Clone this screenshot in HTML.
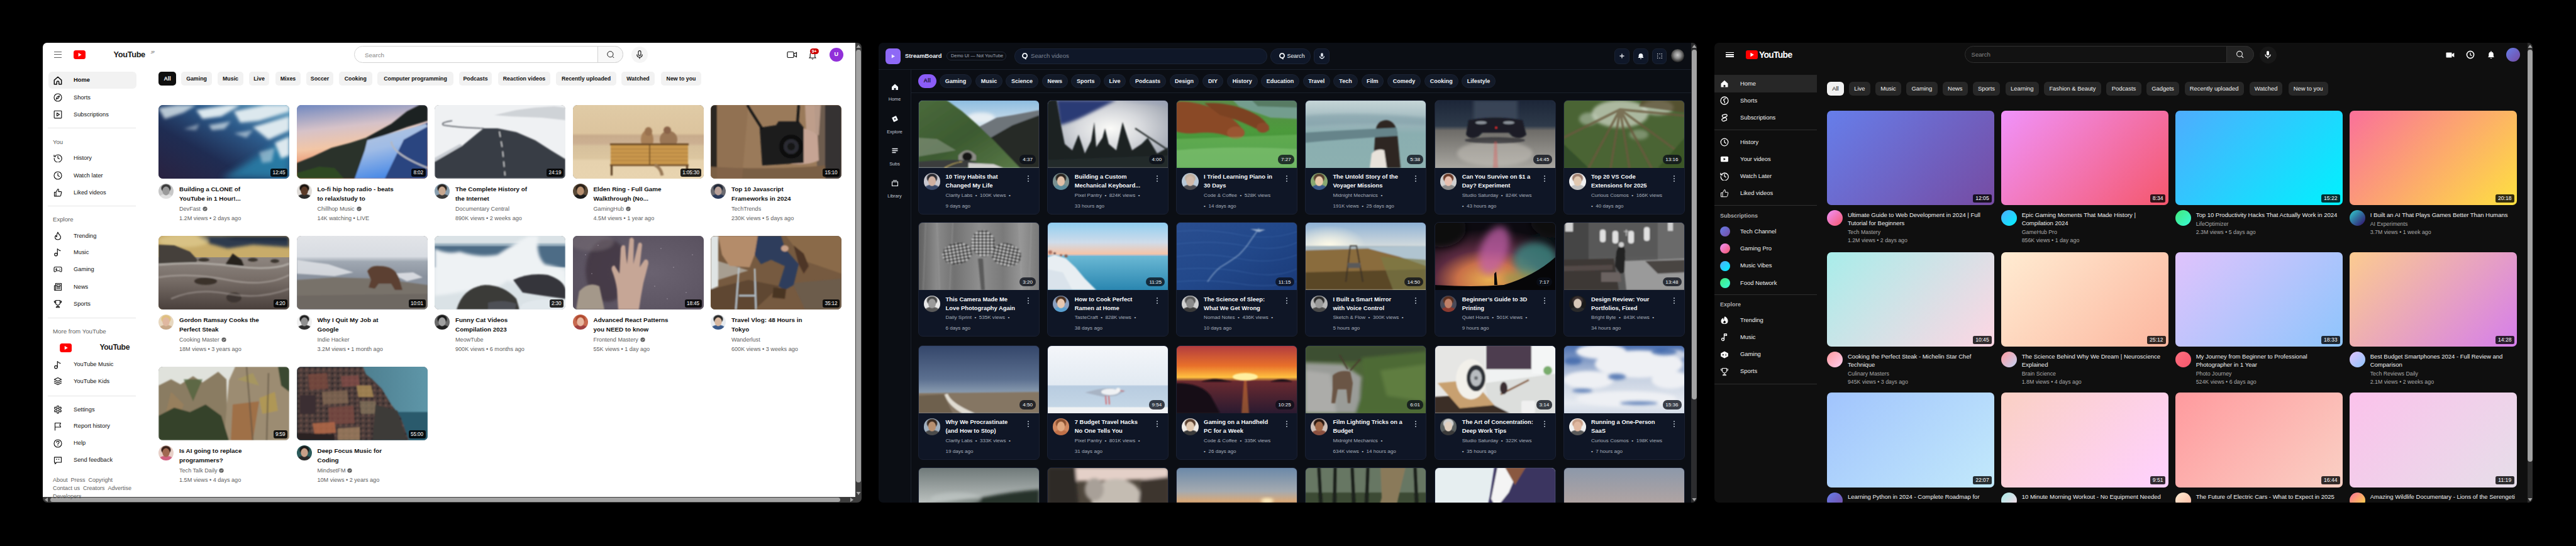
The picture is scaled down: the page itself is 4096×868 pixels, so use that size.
<!DOCTYPE html><html><head><meta charset="utf-8"><title>r</title><style>
*{margin:0;padding:0;box-sizing:border-box}
html,body{width:4096px;height:868px;overflow:hidden;background:#000}
body{font-family:"Liberation Sans",sans-serif;position:relative}
.p{position:absolute;overflow:hidden}
.ab{position:absolute;white-space:nowrap}
svg{position:absolute;display:block}


</style></head><body>
<svg width="0" height="0" style="position:absolute"><defs><filter id="bl1" x="-10%" y="-10%" width="120%" height="120%"><feGaussianBlur stdDeviation="1.2"/></filter><filter id="bl2" x="-30%" y="-30%" width="160%" height="160%"><feGaussianBlur stdDeviation="2.5"/></filter><filter id="bl4" x="-30%" y="-30%" width="160%" height="160%"><feGaussianBlur stdDeviation="6"/></filter></defs></svg>
<div class="p" style="left:68px;top:68px;width:1302px;height:731px;border-radius:7px;background:#3d3d3d">
<div style="position:absolute;left:-68px;top:-68px;width:4096px;height:868px">
<div class="ab" style="left:68px;top:68px;width:1292px;height:722px;background:#fff"></div>
<div class="ab" style="left:1361px;top:79px;width:8px;height:688px;background:#a3a3a3;border-radius:4px"></div>
<svg style="left:1361px;top:70px" width="8" height="7"><path d="M4 1 L7.5 6 L0.5 6Z" fill="#a3a3a3"/></svg>
<svg style="left:1361px;top:781px" width="8" height="7"><path d="M0.5 1 L7.5 1 L4 6Z" fill="#a3a3a3"/></svg>
<div class="ab" style="left:80px;top:791px;width:1256px;height:7px;background:#a3a3a3;border-radius:4px"></div>
<svg style="left:70px;top:790px" width="8" height="9"><path d="M1 4.5 L6 1 L6 8Z" fill="#a3a3a3"/></svg>
<svg style="left:1350px;top:790px" width="8" height="9"><path d="M7 4.5 L2 1 L2 8Z" fill="#a3a3a3"/></svg>
<div class="ab" style="left:86.3px;top:81.8px;width:11.5px;height:1.2px;background:#606060"></div>
<div class="ab" style="left:86.3px;top:85.9px;width:11.5px;height:1.2px;background:#606060"></div>
<div class="ab" style="left:86.3px;top:90.5px;width:11.5px;height:1.2px;background:#606060"></div>
<svg style="left:117px;top:80px" width="19" height="14" viewBox="0 0 19 14"><rect x="0" y="0" width="19" height="14" rx="3.5" fill="#f00"/><path d="M7.6 4 L12.6 7 L7.6 10Z" fill="#fff"/></svg>
<div class="ab" style="left:180.5px;top:78.88px;font-size:12.8px;line-height:16.64px;color:#212121;font-weight:bold;letter-spacing:-0.35px">YouTube</div>
<div class="ab" style="left:239.5px;top:79.76px;font-size:5.6px;line-height:7.28px;color:#606060;">JP</div>
<div class="ab" style="left:563px;top:73px;width:428px;height:27px;border:1px solid #d3d3d3;border-radius:14px;background:#fff"></div>
<div class="ab" style="left:950px;top:73px;width:41px;height:27px;border:1px solid #d3d3d3;border-radius:0 14px 14px 0;background:#f8f8f8"></div>
<div class="ab" style="left:580px;top:82.13px;font-size:9.8px;line-height:12.74px;color:#888;">Search</div>
<svg style="left:963px;top:79px" width="16" height="16" viewBox="0 0 16 16"><circle cx="7.4" cy="7.2" r="4.6" fill="none" stroke="#0f0f0f" stroke-width="0.95"/><path d="M10.7 10.5 L13.2 13" stroke="#0f0f0f" stroke-width="1"/></svg>
<div class="ab" style="left:1003.5px;top:73.5px;width:26px;height:26px;border-radius:13px;background:#f5f5f5"></div>
<svg style="left:1010px;top:79px" width="14" height="16" viewBox="0 0 14 16"><rect x="5" y="1.6" width="4" height="7.6" rx="2" fill="none" stroke="#0f0f0f" stroke-width="1.1"/><path d="M2.8 7.5 Q2.8 12 7 12 Q11.2 12 11.2 7.5" fill="none" stroke="#0f0f0f" stroke-width="1.2"/><path d="M7 12 V14.5" stroke="#0f0f0f" stroke-width="1.2"/></svg>
<svg style="left:1251px;top:80px" width="17" height="14" viewBox="0 0 17 14"><rect x="1" y="2.5" width="10" height="9" rx="1.5" fill="none" stroke="#0f0f0f" stroke-width="1.2"/><path d="M11 6 L15.5 3.5 V10.5 L11 8" fill="none" stroke="#0f0f0f" stroke-width="1.2"/></svg>
<svg style="left:1284px;top:80px" width="16" height="16" viewBox="0 0 16 16"><path d="M3 12 H13 L11.8 10.5 V7 Q11.8 3.5 8 3.3 Q4.2 3.5 4.2 7 V10.5Z" fill="none" stroke="#0f0f0f" stroke-width="1.1"/><path d="M6.8 13.6 Q8 14.8 9.2 13.6" fill="none" stroke="#0f0f0f" stroke-width="1"/></svg>
<div class="ab" style="left:1287.5px;top:77px;width:14px;height:9px;border-radius:4.5px;background:#cc0000;color:#fff;font-size:6.8px;font-weight:bold;line-height:9px;text-align:center">9+</div>
<div class="ab" style="left:1319px;top:76px;width:22px;height:22px;border-radius:11px;background:#9130d9"></div>
<div class="ab" style="left:1326.5px;top:81.15px;font-size:9px;line-height:11.7px;color:#fff;font-weight:bold;">U</div>
<div class="ab" style="left:77px;top:114px;width:140px;height:26.5px;border-radius:6px;background:#f2f2f2"></div>
<svg style="left:85px;top:120.50px" width="14" height="14" viewBox="0 0 14 14"><path d="M1.3 6.4 L7 1.2 L12.7 6.4 V12.9 H8.7 V9.4 Q8.7 7.9 7 7.9 Q5.3 7.9 5.3 9.4 V12.9 H1.3Z" fill="none" stroke="#0f0f0f" stroke-width="1.5" stroke-linejoin="round"/></svg>
<div class="ab" style="left:117px;top:121.45px;font-size:9.3px;line-height:12.09px;color:#0f0f0f;font-weight:bold;">Home</div>
<svg style="left:85px;top:147.70px" width="14" height="14" viewBox="0 0 14 14"><circle cx="7" cy="7" r="6" fill="none" stroke="#0f0f0f" stroke-width="1.15" stroke-linejoin="round" stroke-linecap="round"/><path d="M9.6 4.4 L8 8 L4.4 9.6 L6 6Z" fill="none" stroke="#0f0f0f" stroke-width="1.15" stroke-linejoin="round" stroke-linecap="round"/></svg>
<div class="ab" style="left:117px;top:148.66px;font-size:9.3px;line-height:12.09px;color:#0f0f0f;">Shorts</div>
<svg style="left:85px;top:174.60px" width="14" height="14" viewBox="0 0 14 14"><rect x="1.2" y="1.2" width="11.6" height="11.6" rx="0.8" fill="none" stroke="#0f0f0f" stroke-width="1.15" stroke-linejoin="round" stroke-linecap="round"/><path d="M5.5 4.5 L9.5 7 L5.5 9.5Z" fill="none" stroke="#0f0f0f" stroke-width="1.15" stroke-linejoin="round" stroke-linecap="round"/></svg>
<div class="ab" style="left:117px;top:175.56px;font-size:9.3px;line-height:12.09px;color:#0f0f0f;">Subscriptions</div>
<svg style="left:85px;top:243.70px" width="14" height="14" viewBox="0 0 14 14"><path d="M2.4 4.4 A6 6 0 1 1 1.2 7.6" fill="none" stroke="#0f0f0f" stroke-width="1.15" stroke-linejoin="round" stroke-linecap="round"/><path d="M1 2.5 V5 H3.5" fill="none" stroke="#0f0f0f" stroke-width="1.15" stroke-linejoin="round" stroke-linecap="round"/><path d="M7 4 V7.2 L9.2 8.6" fill="none" stroke="#0f0f0f" stroke-width="1.15" stroke-linejoin="round" stroke-linecap="round"/></svg>
<div class="ab" style="left:117px;top:244.66px;font-size:9.3px;line-height:12.09px;color:#0f0f0f;">History</div>
<svg style="left:85px;top:271.60px" width="14" height="14" viewBox="0 0 14 14"><circle cx="7" cy="7" r="6" fill="none" stroke="#0f0f0f" stroke-width="1.15" stroke-linejoin="round" stroke-linecap="round"/><path d="M7 3.5 V7.2 L9.4 8.6" fill="none" stroke="#0f0f0f" stroke-width="1.15" stroke-linejoin="round" stroke-linecap="round"/></svg>
<div class="ab" style="left:117px;top:272.56px;font-size:9.3px;line-height:12.09px;color:#0f0f0f;">Watch later</div>
<svg style="left:85px;top:298.60px" width="14" height="14" viewBox="0 0 14 14"><path d="M1.5 6.5 H4 V12.8 H1.5Z M4 6.5 L7 1.5 Q8.5 1.5 8.3 3.5 L8 5.6 H11.8 Q13 5.8 12.7 7 L11.6 11.8 Q11.3 12.8 10.2 12.8 H4" fill="none" stroke="#0f0f0f" stroke-width="1.15" stroke-linejoin="round" stroke-linecap="round"/></svg>
<div class="ab" style="left:117px;top:299.56px;font-size:9.3px;line-height:12.09px;color:#0f0f0f;">Liked videos</div>
<svg style="left:85px;top:368.00px" width="14" height="14" viewBox="0 0 14 14"><path d="M7 1.2 Q7.8 4 10 5.8 Q12 7.8 11.4 10.2 Q10.6 13 7 13 Q3.4 13 2.6 10.2 Q2 8 3.8 6.2 Q4 8 5.2 8.6 Q4.8 4.4 7 1.2Z" fill="none" stroke="#0f0f0f" stroke-width="1.15" stroke-linejoin="round" stroke-linecap="round"/></svg>
<div class="ab" style="left:117px;top:368.95px;font-size:9.3px;line-height:12.09px;color:#0f0f0f;">Trending</div>
<svg style="left:85px;top:394.30px" width="14" height="14" viewBox="0 0 14 14"><circle cx="4" cy="10.6" r="2.3" fill="none" stroke="#0f0f0f" stroke-width="1.15" stroke-linejoin="round" stroke-linecap="round"/><path d="M6.3 10.6 V1.5 Q8 3.8 11 4.6" fill="none" stroke="#0f0f0f" stroke-width="1.15" stroke-linejoin="round" stroke-linecap="round"/></svg>
<div class="ab" style="left:117px;top:395.25px;font-size:9.3px;line-height:12.09px;color:#0f0f0f;">Music</div>
<svg style="left:85px;top:421.30px" width="14" height="14" viewBox="0 0 14 14"><path d="M2.8 3.5 H11.2 Q13 3.5 13 6 V9.4 Q13 11 11.5 11 Q10.5 11 9.5 9.5 H4.5 Q3.5 11 2.5 11 Q1 11 1 9.4 V6 Q1 3.5 2.8 3.5Z" fill="none" stroke="#0f0f0f" stroke-width="1.15" stroke-linejoin="round" stroke-linecap="round"/><path d="M3.3 7 H5.9 M4.6 5.7 V8.3" fill="none" stroke="#0f0f0f" stroke-width="1.15" stroke-linejoin="round" stroke-linecap="round"/><circle cx="9.6" cy="6.4" r="0.5" fill="#0f0f0f"/><circle cx="10.4" cy="7.8" r="0.5" fill="#0f0f0f"/></svg>
<div class="ab" style="left:117px;top:422.25px;font-size:9.3px;line-height:12.09px;color:#0f0f0f;">Gaming</div>
<svg style="left:85px;top:448.60px" width="14" height="14" viewBox="0 0 14 14"><path d="M3.5 1.5 H12.5 V12.5 H2.5 Q1.5 12.5 1.5 11.5 V5 H3.5Z M3.5 5 V11.5" fill="none" stroke="#0f0f0f" stroke-width="1.15" stroke-linejoin="round" stroke-linecap="round"/><rect x="5.3" y="3.5" width="5.3" height="2.6" fill="none" stroke="#0f0f0f" stroke-width="1.15" stroke-linejoin="round" stroke-linecap="round"/><path d="M5.3 8 H10.6 M5.3 10 H10.6" fill="none" stroke="#0f0f0f" stroke-width="1.15" stroke-linejoin="round" stroke-linecap="round"/></svg>
<div class="ab" style="left:117px;top:449.56px;font-size:9.3px;line-height:12.09px;color:#0f0f0f;">News</div>
<svg style="left:85px;top:475.90px" width="14" height="14" viewBox="0 0 14 14"><path d="M3.6 1.5 H10.4 V5.5 Q10.4 9 7 9 Q3.6 9 3.6 5.5Z M3.6 2.8 H1.3 Q1.2 5.6 3.7 6 M10.4 2.8 H12.7 Q12.8 5.6 10.3 6 M7 9 V11.3 M4.3 12.7 H9.7 L9 11.3 H5Z" fill="none" stroke="#0f0f0f" stroke-width="1.15" stroke-linejoin="round" stroke-linecap="round"/></svg>
<div class="ab" style="left:117px;top:476.85px;font-size:9.3px;line-height:12.09px;color:#0f0f0f;">Sports</div>
<svg style="left:85px;top:572.50px" width="14" height="14" viewBox="0 0 14 14"><circle cx="4" cy="10.6" r="2.3" fill="none" stroke="#0f0f0f" stroke-width="1.15" stroke-linejoin="round" stroke-linecap="round"/><path d="M6.3 10.6 V1.5 Q8 3.8 11 4.6" fill="none" stroke="#0f0f0f" stroke-width="1.15" stroke-linejoin="round" stroke-linecap="round"/></svg>
<div class="ab" style="left:117px;top:573.46px;font-size:9.3px;line-height:12.09px;color:#0f0f0f;">YouTube Music</div>
<svg style="left:85px;top:599.00px" width="14" height="14" viewBox="0 0 14 14"><path d="M7 1.5 L12.6 4.2 L7 7 L1.4 4.2Z M1.4 7 L7 9.8 L12.6 7 M1.4 9.8 L7 12.6 L12.6 9.8" fill="none" stroke="#0f0f0f" stroke-width="1.15" stroke-linejoin="round" stroke-linecap="round"/></svg>
<div class="ab" style="left:117px;top:599.96px;font-size:9.3px;line-height:12.09px;color:#0f0f0f;">YouTube Kids</div>
<svg style="left:85px;top:643.80px" width="14" height="14" viewBox="0 0 14 14"><circle cx="7" cy="7" r="2.2" fill="none" stroke="#0f0f0f" stroke-width="1.15" stroke-linejoin="round" stroke-linecap="round"/><path d="M6 1.2 H8 L8.4 2.9 L9.8 3.7 L11.5 3.1 L12.5 4.9 L11.2 6.1 V7.9 L12.5 9.1 L11.5 10.9 L9.8 10.3 L8.4 11.1 L8 12.8 H6 L5.6 11.1 L4.2 10.3 L2.5 10.9 L1.5 9.1 L2.8 7.9 V6.1 L1.5 4.9 L2.5 3.1 L4.2 3.7 L5.6 2.9Z" fill="none" stroke="#0f0f0f" stroke-width="1.15" stroke-linejoin="round" stroke-linecap="round"/></svg>
<div class="ab" style="left:117px;top:644.75px;font-size:9.3px;line-height:12.09px;color:#0f0f0f;">Settings</div>
<svg style="left:85px;top:670.50px" width="14" height="14" viewBox="0 0 14 14"><path d="M2.5 13 V1.5 H11.5 L10 4.8 L11.5 8 H2.5" fill="none" stroke="#0f0f0f" stroke-width="1.15" stroke-linejoin="round" stroke-linecap="round"/></svg>
<div class="ab" style="left:117px;top:671.46px;font-size:9.3px;line-height:12.09px;color:#0f0f0f;">Report history</div>
<svg style="left:85px;top:697.50px" width="14" height="14" viewBox="0 0 14 14"><circle cx="7" cy="7" r="6" fill="none" stroke="#0f0f0f" stroke-width="1.15" stroke-linejoin="round" stroke-linecap="round"/><path d="M5 5.3 Q5 3.4 7 3.4 Q9 3.4 9 5.2 Q9 6.4 7.6 7 Q7 7.4 7 8.4" fill="none" stroke="#0f0f0f" stroke-width="1.15" stroke-linejoin="round" stroke-linecap="round"/><circle cx="7" cy="10.4" r="0.7" fill="#0f0f0f"/></svg>
<div class="ab" style="left:117px;top:698.46px;font-size:9.3px;line-height:12.09px;color:#0f0f0f;">Help</div>
<svg style="left:85px;top:724.50px" width="14" height="14" viewBox="0 0 14 14"><path d="M1.5 1.8 H12.5 V10 H5 L2.5 12.5 V10 H1.5Z" fill="none" stroke="#0f0f0f" stroke-width="1.15" stroke-linejoin="round" stroke-linecap="round"/><path d="M5 4.5 V6 M8.5 4.5 V6" stroke="#0f0f0f" stroke-width="1.3"/></svg>
<div class="ab" style="left:117px;top:725.46px;font-size:9.3px;line-height:12.09px;color:#0f0f0f;">Send feedback</div>
<div class="ab" style="left:76px;top:203px;width:140px;height:1px;background:#e5e5e5"></div>
<div class="ab" style="left:76px;top:327px;width:140px;height:1px;background:#e5e5e5"></div>
<div class="ab" style="left:76px;top:504.6px;width:140px;height:1px;background:#e5e5e5"></div>
<div class="ab" style="left:76px;top:628.8px;width:140px;height:1px;background:#e5e5e5"></div>
<div class="ab" style="left:84px;top:219.96px;font-size:9.6px;line-height:12.48px;color:#606060;">You</div>
<div class="ab" style="left:84px;top:342.96px;font-size:9.6px;line-height:12.48px;color:#606060;">Explore</div>
<div class="ab" style="left:84px;top:520.70px;font-size:9.7px;line-height:12.61px;color:#606060;">More from YouTube</div>
<svg style="left:95px;top:545.5px" width="19.3" height="14" viewBox="0 0 19 14"><rect x="0" y="0" width="19" height="14" rx="3.5" fill="#f00"/><path d="M7.6 4 L12.6 7 L7.6 10Z" fill="#fff"/></svg>
<div class="ab" style="left:158.5px;top:544.57px;font-size:12.2px;line-height:15.86px;color:#212121;font-weight:bold;letter-spacing:-0.4px">YouTube</div>
<div class="ab" style="left:84px;top:757.65px;font-size:9px;line-height:11.7px;color:#606060;">About&nbsp;&nbsp;Press&nbsp;&nbsp;Copyright</div>
<div class="ab" style="left:84px;top:771.15px;font-size:9px;line-height:11.7px;color:#606060;">Contact us&nbsp;&nbsp;Creators&nbsp;&nbsp;Advertise</div>
<div class="ab" style="left:84px;top:784.45px;font-size:9px;line-height:11.7px;color:#606060;">Developers</div>
<div class="ab" style="left:252px;top:114px;width:28px;height:22px;border-radius:5px;background:#0f0f0f;color:#fff;font-size:8.8px;font-weight:bold;line-height:23px;text-align:center">All</div>
<div class="ab" style="left:288px;top:114px;width:49px;height:22px;border-radius:5px;background:#f2f2f2;color:#0f0f0f;font-size:8.8px;font-weight:bold;line-height:23px;text-align:center">Gaming</div>
<div class="ab" style="left:346px;top:114px;width:41px;height:22px;border-radius:5px;background:#f2f2f2;color:#0f0f0f;font-size:8.8px;font-weight:bold;line-height:23px;text-align:center">Music</div>
<div class="ab" style="left:396px;top:114px;width:32px;height:22px;border-radius:5px;background:#f2f2f2;color:#0f0f0f;font-size:8.8px;font-weight:bold;line-height:23px;text-align:center">Live</div>
<div class="ab" style="left:438px;top:114px;width:40px;height:22px;border-radius:5px;background:#f2f2f2;color:#0f0f0f;font-size:8.8px;font-weight:bold;line-height:23px;text-align:center">Mixes</div>
<div class="ab" style="left:487px;top:114px;width:43px;height:22px;border-radius:5px;background:#f2f2f2;color:#0f0f0f;font-size:8.8px;font-weight:bold;line-height:23px;text-align:center">Soccer</div>
<div class="ab" style="left:539px;top:114px;width:52.5px;height:22px;border-radius:5px;background:#f2f2f2;color:#0f0f0f;font-size:8.8px;font-weight:bold;line-height:23px;text-align:center">Cooking</div>
<div class="ab" style="left:600px;top:114px;width:121px;height:22px;border-radius:5px;background:#f2f2f2;color:#0f0f0f;font-size:8.8px;font-weight:bold;line-height:23px;text-align:center">Computer programming</div>
<div class="ab" style="left:730px;top:114px;width:52px;height:22px;border-radius:5px;background:#f2f2f2;color:#0f0f0f;font-size:8.8px;font-weight:bold;line-height:23px;text-align:center">Podcasts</div>
<div class="ab" style="left:792px;top:114px;width:83px;height:22px;border-radius:5px;background:#f2f2f2;color:#0f0f0f;font-size:8.8px;font-weight:bold;line-height:23px;text-align:center">Reaction videos</div>
<div class="ab" style="left:884px;top:114px;width:96px;height:22px;border-radius:5px;background:#f2f2f2;color:#0f0f0f;font-size:8.8px;font-weight:bold;line-height:23px;text-align:center">Recently uploaded</div>
<div class="ab" style="left:988px;top:114px;width:53px;height:22px;border-radius:5px;background:#f2f2f2;color:#0f0f0f;font-size:8.8px;font-weight:bold;line-height:23px;text-align:center">Watched</div>
<div class="ab" style="left:1051px;top:114px;width:64px;height:22px;border-radius:5px;background:#f2f2f2;color:#0f0f0f;font-size:8.8px;font-weight:bold;line-height:23px;text-align:center">New to you</div>
<div class="ab" style="left:252px;top:167px;width:208px;height:117px;border-radius:7px;overflow:hidden;background:#777"><svg style="position:absolute;left:0;top:0" width="100%" height="100%" viewBox="0 0 208 117" preserveAspectRatio="none"><defs><linearGradient id="g11" x1="0" y1="1" x2="1" y2="0"><stop offset="0" stop-color="#2a2240"/><stop offset=".35" stop-color="#1f2c52"/><stop offset=".65" stop-color="#2c5a8a"/><stop offset="1" stop-color="#6aa8c8"/></linearGradient></defs>
<rect width="208" height="117" fill="url(#g11)"/>
<path d="M100 117 L208 50 L208 117Z" fill="#2c86b0" opacity=".8" filter="url(#bl4)"/>
<g fill="#dce8ee" filter="url(#bl2)"><path d="M0 5 L30 0 L60 0 L40 12 L10 22Z" opacity=".8"/><path d="M60 8 L110 0 L130 0 L100 18 L70 22Z"/><path d="M120 10 L170 0 L208 0 L208 10 L160 25 L130 28Z"/><path d="M150 35 L208 18 L208 40 L175 55Z"/><path d="M185 60 L208 50 L208 80 L195 85Z"/><path d="M80 32 L115 26 L105 38 L85 40Z" opacity=".7"/><path d="M120 45 L150 40 L140 52Z" opacity=".6"/><path d="M160 75 L185 68 L180 90 L165 92Z" opacity=".5"/><path d="M40 38 L65 30 L60 40Z" opacity=".5"/></g></svg></div>
<div class="ab" style="left:430.0px;top:268.2px;width:27.0px;height:12.5px;border-radius:3px;background:rgba(0,0,0,.85);color:#fff;font-size:8.2px;line-height:14.6px;text-align:center;letter-spacing:-0.1px">12:45</div>
<div class="ab" style="left:252px;top:292px;width:24px;height:24px;border-radius:12px;background:radial-gradient(ellipse 26% 32% at 50% 48%,#9a9a9a 0,#9a9a9a 80%,transparent 100%),radial-gradient(ellipse 36% 30% at 50% 30%,#3a3a3a 0,#3a3a3a 75%,transparent 100%),radial-gradient(ellipse 55% 35% at 50% 100%,#e0e0e0 0,#e0e0e0 80%,transparent 100%),#c8c8c8"></div>
<div class="ab" style="left:285px;top:292.5px;font-size:9.9px;line-height:15px;color:#0f0f0f;font-weight:bold;white-space:nowrap">Building a CLONE of<br>YouTube in 1 Hour!...</div>
<div class="ab" style="left:285px;top:327.08px;font-size:9.1px;line-height:11.83px;color:#606060;">DevFast<svg style="display:inline-block;position:relative;left:3px;top:1px" width="8" height="8" viewBox="0 0 8 8"><circle cx="4" cy="4" r="3.6" fill="#606060"/><path d="M2.3 4.1 L3.5 5.2 L5.7 2.9" fill="none" stroke="#fff" stroke-width="0.9"/></svg></div>
<div class="ab" style="left:285px;top:342.08px;font-size:9.1px;line-height:11.83px;color:#606060;">1.2M views • 2 days ago</div>
<div class="ab" style="left:471.5px;top:167px;width:208px;height:117px;border-radius:7px;overflow:hidden;background:#777"><svg style="position:absolute;left:0;top:0" width="100%" height="100%" viewBox="0 0 208 117" preserveAspectRatio="none"><defs><linearGradient id="g12" x1="0" y1="0" x2=".2" y2="1"><stop offset="0" stop-color="#7088c0"/><stop offset=".35" stop-color="#d6c2c8"/><stop offset=".6" stop-color="#f2c6a6"/><stop offset=".85" stop-color="#e88a64"/></linearGradient>
<linearGradient id="g12w" x1="0" y1="0" x2=".3" y2="1"><stop offset="0" stop-color="#b8c8dc"/><stop offset=".5" stop-color="#a0bce6"/><stop offset="1" stop-color="#4a8ae6"/></linearGradient></defs>
<rect width="208" height="117" fill="url(#g12)"/>
<g filter="url(#bl1)"><path d="M0 92 L25 82 L55 68 L85 60 L110 52 L125 50 L105 117 L0 117Z" fill="#2c302c"/><path d="M0 117 L0 108 L35 98 L60 100 L75 117Z" fill="#2e4a24"/>
<path d="M110 52 L150 30 L175 10 L195 0 L208 0 L208 25 L175 35 L140 48 L120 56Z" fill="#1c2420"/>
<path d="M122 58 L208 28 L208 117 L130 117Z" fill="#2a4480"/>
<path d="M112 56 L160 42 L205 30 L208 34 L170 55 L140 117 L92 117 L108 72Z" fill="url(#g12w)"/>
<path d="M150 58 Q152 78 208 100" stroke="#b4b8c0" stroke-width="2.6" fill="none"/></g></svg></div>
<div class="ab" style="left:654.0px;top:268.2px;width:22.5px;height:12.5px;border-radius:3px;background:rgba(0,0,0,.85);color:#fff;font-size:8.2px;line-height:14.6px;text-align:center;letter-spacing:-0.1px">8:02</div>
<div class="ab" style="left:471.5px;top:292px;width:24px;height:24px;border-radius:12px;background:radial-gradient(ellipse 26% 32% at 50% 48%,#5a3a28 0,#5a3a28 80%,transparent 100%),radial-gradient(ellipse 36% 30% at 50% 30%,#1a1410 0,#1a1410 75%,transparent 100%),radial-gradient(ellipse 55% 35% at 50% 100%,#2a2a2a 0,#2a2a2a 80%,transparent 100%),#e0dcd8"></div>
<div class="ab" style="left:504.5px;top:292.5px;font-size:9.9px;line-height:15px;color:#0f0f0f;font-weight:bold;white-space:nowrap">Lo-fi hip hop radio - beats<br>to relax/study to</div>
<div class="ab" style="left:504.5px;top:327.08px;font-size:9.1px;line-height:11.83px;color:#606060;">Chillhop Music<svg style="display:inline-block;position:relative;left:3px;top:1px" width="8" height="8" viewBox="0 0 8 8"><circle cx="4" cy="4" r="3.6" fill="#606060"/><path d="M2.3 4.1 L3.5 5.2 L5.7 2.9" fill="none" stroke="#fff" stroke-width="0.9"/></svg></div>
<div class="ab" style="left:504.5px;top:342.08px;font-size:9.1px;line-height:11.83px;color:#606060;">14K watching • LIVE</div>
<div class="ab" style="left:691px;top:167px;width:208px;height:117px;border-radius:7px;overflow:hidden;background:#777"><svg style="position:absolute;left:0;top:0" width="100%" height="100%" viewBox="0 0 208 117" preserveAspectRatio="none"><rect width="208" height="117" fill="#eff1f3"/>
<g filter="url(#bl1)"><path d="M95 16 L130 8 L160 4 L190 2 L208 4 L208 24 L170 20 L120 18Z" fill="#c4c8ce" opacity=".75"/>
<path d="M0 117 L208 117 L208 86 L185 72 L160 56 L130 43 L100 37 L78 37 L68 45 L45 64 L0 90Z" fill="#393c44"/>
<path d="M0 90 L45 64 L40 62 L0 84Z" fill="#c8ccd2"/>
<path d="M78 37 Q40 36 14 32 Q8 28 28 25" stroke="#4a4e56" stroke-width="1.4" fill="none"/>
<path d="M103 42 L108 70 L112 112" stroke="#d0d2d4" stroke-width="1.6" stroke-dasharray="9 7" fill="none"/></g></svg></div>
<div class="ab" style="left:869.0px;top:268.2px;width:27.0px;height:12.5px;border-radius:3px;background:rgba(0,0,0,.85);color:#fff;font-size:8.2px;line-height:14.6px;text-align:center;letter-spacing:-0.1px">24:19</div>
<div class="ab" style="left:691px;top:292px;width:24px;height:24px;border-radius:12px;background:radial-gradient(ellipse 26% 32% at 50% 48%,#c8a890 0,#c8a890 80%,transparent 100%),radial-gradient(ellipse 36% 30% at 50% 30%,#2a2420 0,#2a2420 75%,transparent 100%),radial-gradient(ellipse 55% 35% at 50% 100%,#3a3a3a 0,#3a3a3a 80%,transparent 100%),#8aa0b0"></div>
<div class="ab" style="left:724px;top:292.5px;font-size:9.9px;line-height:15px;color:#0f0f0f;font-weight:bold;white-space:nowrap">The Complete History of<br>the Internet</div>
<div class="ab" style="left:724px;top:327.08px;font-size:9.1px;line-height:11.83px;color:#606060;">Documentary Central</div>
<div class="ab" style="left:724px;top:342.08px;font-size:9.1px;line-height:11.83px;color:#606060;">890K views • 2 weeks ago</div>
<div class="ab" style="left:910.5px;top:167px;width:208px;height:117px;border-radius:7px;overflow:hidden;background:#777"><svg style="position:absolute;left:0;top:0" width="100%" height="100%" viewBox="0 0 208 117" preserveAspectRatio="none"><defs><linearGradient id="g14" x1="0" y1="0" x2="0" y2="1"><stop offset="0" stop-color="#e0cba6"/><stop offset=".38" stop-color="#dcc49e"/><stop offset=".42" stop-color="#c8ac8c"/><stop offset=".52" stop-color="#ccb092"/><stop offset=".56" stop-color="#d6c09c"/><stop offset=".72" stop-color="#dcc6a0"/><stop offset=".76" stop-color="#e6d2ae"/><stop offset="1" stop-color="#e8d4b0"/></linearGradient></defs>
<rect width="208" height="117" fill="url(#g14)"/>
<g filter="url(#bl1)"><ellipse cx="118" cy="55" rx="10" ry="15" fill="#a88058"/><ellipse cx="120" cy="42" rx="6" ry="7" fill="#9a7250"/><ellipse cx="152" cy="55" rx="14" ry="14" fill="#9a7654"/><ellipse cx="150" cy="40" rx="6" ry="6" fill="#8a6448"/>
<rect x="60" y="63" width="123" height="31" fill="#c9974c"/><path d="M60 70 H183 M60 76 H183 M60 82 H183 M60 88 H183" stroke="#a87838" stroke-width="1.2"/><path d="M122 63 V94" stroke="#7a5428" stroke-width="2"/>
<rect x="59" y="61" width="125" height="3" fill="#6a4a28"/><rect x="59" y="94" width="125" height="3" fill="#7a5630"/>
<rect x="60" y="96" width="3" height="16" fill="#5a3e22"/><rect x="180" y="96" width="3" height="16" fill="#5a3e22"/><path d="M130 95 Q140 100 142 112" stroke="#9a7a58" stroke-width="5" fill="none"/></g></svg></div>
<div class="ab" style="left:1081.6px;top:268.2px;width:33.9px;height:12.5px;border-radius:3px;background:rgba(0,0,0,.85);color:#fff;font-size:8.2px;line-height:14.6px;text-align:center;letter-spacing:-0.1px">1:05:30</div>
<div class="ab" style="left:910.5px;top:292px;width:24px;height:24px;border-radius:12px;background:radial-gradient(ellipse 26% 32% at 50% 48%,#b89070 0,#b89070 80%,transparent 100%),radial-gradient(ellipse 36% 30% at 50% 30%,#2a2018 0,#2a2018 75%,transparent 100%),radial-gradient(ellipse 55% 35% at 50% 100%,#1a1a1a 0,#1a1a1a 80%,transparent 100%),#5a4a38"></div>
<div class="ab" style="left:943.5px;top:292.5px;font-size:9.9px;line-height:15px;color:#0f0f0f;font-weight:bold;white-space:nowrap">Elden Ring - Full Game<br>Walkthrough (No...</div>
<div class="ab" style="left:943.5px;top:327.08px;font-size:9.1px;line-height:11.83px;color:#606060;">GamingHub<svg style="display:inline-block;position:relative;left:3px;top:1px" width="8" height="8" viewBox="0 0 8 8"><circle cx="4" cy="4" r="3.6" fill="#606060"/><path d="M2.3 4.1 L3.5 5.2 L5.7 2.9" fill="none" stroke="#fff" stroke-width="0.9"/></svg></div>
<div class="ab" style="left:943.5px;top:342.08px;font-size:9.1px;line-height:11.83px;color:#606060;">4.5M views • 1 year ago</div>
<div class="ab" style="left:1130px;top:167px;width:208px;height:117px;border-radius:7px;overflow:hidden;background:#777"><svg style="position:absolute;left:0;top:0" width="100%" height="100%" viewBox="0 0 208 117" preserveAspectRatio="none"><rect width="208" height="117" fill="#9a7a5a"/>
<g filter="url(#bl1)"><rect x="0" y="0" width="10" height="117" fill="#2a2724"/><rect x="182" y="0" width="26" height="117" fill="#353230"/><path d="M165 0 L182 0 L182 117 L170 117Z" fill="#5a5048" opacity=".7"/>
<path d="M0 98 Q100 104 182 96 L182 117 L0 117Z" fill="#7a5e44"/><path d="M10 0 L60 0 L50 117 L10 117Z" fill="#8a6a4c" opacity=".5"/>
<path d="M118 40 Q150 30 170 48 L172 88 Q150 98 120 92Z" fill="#c6a494"/><path d="M150 0 L175 0 L172 48 L152 44Z" fill="#c4a494" opacity=".85"/>
<path d="M78 36 L104 32 L108 26 L140 26 L148 36 L148 92 L82 96 Z" fill="#1a1a1c"/><circle cx="128" cy="66" r="19" fill="#0c0c0e"/><circle cx="128" cy="66" r="12" fill="#2a2c30"/><circle cx="128" cy="66" r="6" fill="#121416"/>
<path d="M58 0 L82 38 M140 0 L138 28" stroke="#161616" stroke-width="4"/></g></svg></div>
<div class="ab" style="left:1308.0px;top:268.2px;width:27.0px;height:12.5px;border-radius:3px;background:rgba(0,0,0,.85);color:#fff;font-size:8.2px;line-height:14.6px;text-align:center;letter-spacing:-0.1px">15:10</div>
<div class="ab" style="left:1130px;top:292px;width:24px;height:24px;border-radius:12px;background:radial-gradient(ellipse 26% 32% at 50% 48%,#b8a098 0,#b8a098 80%,transparent 100%),radial-gradient(ellipse 36% 30% at 50% 30%,#202838 0,#202838 75%,transparent 100%),radial-gradient(ellipse 55% 35% at 50% 100%,#2a3a5a 0,#2a3a5a 80%,transparent 100%),#6a6a70"></div>
<div class="ab" style="left:1163px;top:292.5px;font-size:9.9px;line-height:15px;color:#0f0f0f;font-weight:bold;white-space:nowrap">Top 10 Javascript<br>Frameworks in 2024</div>
<div class="ab" style="left:1163px;top:327.08px;font-size:9.1px;line-height:11.83px;color:#606060;">TechTrends</div>
<div class="ab" style="left:1163px;top:342.08px;font-size:9.1px;line-height:11.83px;color:#606060;">230K views • 5 days ago</div>
<div class="ab" style="left:252px;top:375px;width:208px;height:117px;border-radius:7px;overflow:hidden;background:#777"><svg style="position:absolute;left:0;top:0" width="100%" height="100%" viewBox="0 0 208 117" preserveAspectRatio="none"><defs><linearGradient id="g21s" x1="0" y1="0" x2="0" y2="1"><stop offset="0" stop-color="#8e8680"/><stop offset=".45" stop-color="#766c66"/><stop offset="1" stop-color="#4a403c"/></linearGradient></defs>
<rect width="208" height="117" fill="#c8ac6a"/>
<g filter="url(#bl2)"><path d="M60 0 L208 0 L208 18 L150 14 L110 20 L80 12Z" fill="#2e3a4e"/><path d="M100 0 L208 0 L208 8 L120 6Z" fill="#1e2a3e"/><ellipse cx="40" cy="8" rx="40" ry="10" fill="#e0cc90" opacity=".7"/></g>
<rect y="34" width="208" height="83" fill="url(#g21s)"/>
<g filter="url(#bl1)"><path d="M0 14 L25 15 L50 25 L62 38 L60 42 L0 44Z" fill="#45403a"/><path d="M106 46 L118 28 L132 38 L136 48Z" fill="#26221e"/><ellipse cx="72" cy="38" rx="9" ry="3" fill="#3a342e"/><ellipse cx="150" cy="38" rx="8" ry="3" fill="#3a342e"/><ellipse cx="185" cy="40" rx="7" ry="3" fill="#3a342e"/>
<ellipse cx="75" cy="72" rx="18" ry="6" fill="#3a322c"/><ellipse cx="120" cy="98" rx="12" ry="8" fill="#3e3630"/>
<path d="M0 46 Q60 40 120 48 T208 44" stroke="#c8c4be" stroke-width="3" fill="none" opacity=".6"/><path d="M0 66 Q50 58 110 70 T208 62" stroke="#bcb4ae" stroke-width="2.5" fill="none" opacity=".55"/><path d="M20 100 Q60 82 110 92 T208 84" stroke="#b8b0aa" stroke-width="2.5" fill="none" opacity=".45"/></g></svg></div>
<div class="ab" style="left:434.5px;top:476.2px;width:22.5px;height:12.5px;border-radius:3px;background:rgba(0,0,0,.85);color:#fff;font-size:8.2px;line-height:14.6px;text-align:center;letter-spacing:-0.1px">4:20</div>
<div class="ab" style="left:252px;top:500px;width:24px;height:24px;border-radius:12px;background:radial-gradient(ellipse 26% 32% at 50% 48%,#e0b8a0 0,#e0b8a0 80%,transparent 100%),radial-gradient(ellipse 36% 30% at 50% 30%,#e0c080 0,#e0c080 75%,transparent 100%),radial-gradient(ellipse 55% 35% at 50% 100%,#c8a888 0,#c8a888 80%,transparent 100%),#e8d8c0"></div>
<div class="ab" style="left:285px;top:500.5px;font-size:9.9px;line-height:15px;color:#0f0f0f;font-weight:bold;white-space:nowrap">Gordon Ramsay Cooks the<br>Perfect Steak</div>
<div class="ab" style="left:285px;top:535.09px;font-size:9.1px;line-height:11.83px;color:#606060;">Cooking Master<svg style="display:inline-block;position:relative;left:3px;top:1px" width="8" height="8" viewBox="0 0 8 8"><circle cx="4" cy="4" r="3.6" fill="#606060"/><path d="M2.3 4.1 L3.5 5.2 L5.7 2.9" fill="none" stroke="#fff" stroke-width="0.9"/></svg></div>
<div class="ab" style="left:285px;top:550.09px;font-size:9.1px;line-height:11.83px;color:#606060;">18M views • 3 years ago</div>
<div class="ab" style="left:471.5px;top:375px;width:208px;height:117px;border-radius:7px;overflow:hidden;background:#777"><svg style="position:absolute;left:0;top:0" width="100%" height="100%" viewBox="0 0 208 117" preserveAspectRatio="none"><defs><linearGradient id="g22" x1="0" y1="0" x2="0" y2="1"><stop offset="0" stop-color="#e2e4e8"/><stop offset=".28" stop-color="#d8dce2"/><stop offset=".35" stop-color="#a0a8b2"/><stop offset=".55" stop-color="#8a929e"/></linearGradient></defs>
<rect width="208" height="117" fill="url(#g22)"/>
<g filter="url(#bl1)"><path d="M0 38 L50 45 L90 58 L60 64 L0 60Z" fill="#e4e6ea" opacity=".8"/><path d="M150 60 L185 58 L200 66 L175 72Z" fill="#e8eaee" opacity=".8"/>
<path d="M0 70 L60 66 L130 68 L208 78 L208 117 L0 117Z" fill="#78726a"/><path d="M0 95 L208 92 L208 117 L0 117Z" fill="#6e6862"/>
<path d="M112 56 Q118 46 132 48 Q155 48 162 66 L168 86 L156 86 L150 76 L130 76 L124 84 L114 82 L118 70Z" fill="#5c4030"/></g></svg></div>
<div class="ab" style="left:649.5px;top:476.2px;width:27.0px;height:12.5px;border-radius:3px;background:rgba(0,0,0,.85);color:#fff;font-size:8.2px;line-height:14.6px;text-align:center;letter-spacing:-0.1px">10:01</div>
<div class="ab" style="left:471.5px;top:500px;width:24px;height:24px;border-radius:12px;background:radial-gradient(ellipse 26% 32% at 50% 48%,#909090 0,#909090 80%,transparent 100%),radial-gradient(ellipse 36% 30% at 50% 30%,#202020 0,#202020 75%,transparent 100%),radial-gradient(ellipse 55% 35% at 50% 100%,#303030 0,#303030 80%,transparent 100%),#f0f0f0"></div>
<div class="ab" style="left:504.5px;top:500.5px;font-size:9.9px;line-height:15px;color:#0f0f0f;font-weight:bold;white-space:nowrap">Why I Quit My Job at<br>Google</div>
<div class="ab" style="left:504.5px;top:535.09px;font-size:9.1px;line-height:11.83px;color:#606060;">Indie Hacker</div>
<div class="ab" style="left:504.5px;top:550.09px;font-size:9.1px;line-height:11.83px;color:#606060;">3.2M views • 1 month ago</div>
<div class="ab" style="left:691px;top:375px;width:208px;height:117px;border-radius:7px;overflow:hidden;background:#777"><svg style="position:absolute;left:0;top:0" width="100%" height="100%" viewBox="0 0 208 117" preserveAspectRatio="none"><rect width="208" height="117" fill="#dae2e6"/>
<g filter="url(#bl1)"><rect y="12" width="208" height="38" fill="#4e6c86"/><rect y="12" width="208" height="4" fill="#9ab0c0"/></g>
<g filter="url(#bl2)" fill="#eef2f4"><path d="M0 20 Q20 30 40 25 Q70 35 100 30 Q130 10 150 0 L165 0 Q160 30 175 45 Q200 50 208 55 L208 85 Q150 80 110 70 Q60 90 0 95Z"/><ellipse cx="60" cy="60" rx="60" ry="28"/><ellipse cx="185" cy="70" rx="25" ry="12" opacity=".8"/></g>
<g filter="url(#bl1)"><path d="M35 117 Q45 82 80 78 Q110 78 130 100 L135 117Z" fill="#3a3a38"/><path d="M125 70 Q150 58 180 62 Q205 70 208 85 L208 100 Q170 95 140 90Z" fill="#34363a"/><path d="M140 108 Q170 96 208 104 L208 117 L135 117Z" fill="#e4eaee" opacity=".8"/><path d="M85 106 Q110 100 130 108 L128 117 L85 117Z" fill="#4e5054"/></g></svg></div>
<div class="ab" style="left:873.5px;top:476.2px;width:22.5px;height:12.5px;border-radius:3px;background:rgba(0,0,0,.85);color:#fff;font-size:8.2px;line-height:14.6px;text-align:center;letter-spacing:-0.1px">2:30</div>
<div class="ab" style="left:691px;top:500px;width:24px;height:24px;border-radius:12px;background:radial-gradient(ellipse 26% 32% at 50% 48%,#a0a0a0 0,#a0a0a0 80%,transparent 100%),radial-gradient(ellipse 36% 30% at 50% 30%,#1a1a1a 0,#1a1a1a 75%,transparent 100%),radial-gradient(ellipse 55% 35% at 50% 100%,#202020 0,#202020 80%,transparent 100%),#6a6a6a"></div>
<div class="ab" style="left:724px;top:500.5px;font-size:9.9px;line-height:15px;color:#0f0f0f;font-weight:bold;white-space:nowrap">Funny Cat Videos<br>Compilation 2023</div>
<div class="ab" style="left:724px;top:535.09px;font-size:9.1px;line-height:11.83px;color:#606060;">MeowTube</div>
<div class="ab" style="left:724px;top:550.09px;font-size:9.1px;line-height:11.83px;color:#606060;">900K views • 6 months ago</div>
<div class="ab" style="left:910.5px;top:375px;width:208px;height:117px;border-radius:7px;overflow:hidden;background:#777"><svg style="position:absolute;left:0;top:0" width="100%" height="100%" viewBox="0 0 208 117" preserveAspectRatio="none"><defs><radialGradient id="g24" cx=".6" cy=".5" r=".7"><stop offset="0" stop-color="#6a6270"/><stop offset="1" stop-color="#58505e"/></radialGradient></defs>
<rect width="208" height="117" fill="url(#g24)"/>
<g filter="url(#bl2)"><ellipse cx="55" cy="55" rx="35" ry="50" fill="#3e323c" opacity=".75"/><ellipse cx="30" cy="10" rx="35" ry="14" fill="#7a7078" opacity=".5"/></g>
<g filter="url(#bl1)"><path d="M72 117 L70 85 Q68 70 62 55 Q60 48 66 47 L74 60 L76 20 Q78 12 83 16 L86 45 L90 5 Q94 0 97 6 L96 45 L104 12 Q108 8 110 14 L106 50 L114 38 Q120 36 120 44 Q116 60 112 75 Q108 95 105 117Z" fill="#c6a696"/>
<path d="M5 117 L10 88 Q25 72 42 80 L50 117Z" fill="#a4988a"/></g>
<g fill="#c8c0cc" opacity=".35"><circle cx="20" cy="30" r="1"/><circle cx="40" cy="15" r="1"/><circle cx="140" cy="20" r="1"/><circle cx="160" cy="50" r="1"/><circle cx="130" cy="80" r="1"/><circle cx="180" cy="90" r="1"/><circle cx="30" cy="60" r="1"/><circle cx="150" cy="100" r="1"/><circle cx="190" cy="30" r="1"/></g></svg></div>
<div class="ab" style="left:1088.5px;top:476.2px;width:27.0px;height:12.5px;border-radius:3px;background:rgba(0,0,0,.85);color:#fff;font-size:8.2px;line-height:14.6px;text-align:center;letter-spacing:-0.1px">18:45</div>
<div class="ab" style="left:910.5px;top:500px;width:24px;height:24px;border-radius:12px;background:radial-gradient(ellipse 26% 32% at 50% 48%,#e8b8a0 0,#e8b8a0 80%,transparent 100%),radial-gradient(ellipse 36% 30% at 50% 30%,#b04a30 0,#b04a30 75%,transparent 100%),radial-gradient(ellipse 55% 35% at 50% 100%,#a04040 0,#a04040 80%,transparent 100%),#c86a50"></div>
<div class="ab" style="left:943.5px;top:500.5px;font-size:9.9px;line-height:15px;color:#0f0f0f;font-weight:bold;white-space:nowrap">Advanced React Patterns<br>you NEED to know</div>
<div class="ab" style="left:943.5px;top:535.09px;font-size:9.1px;line-height:11.83px;color:#606060;">Frontend Mastery<svg style="display:inline-block;position:relative;left:3px;top:1px" width="8" height="8" viewBox="0 0 8 8"><circle cx="4" cy="4" r="3.6" fill="#606060"/><path d="M2.3 4.1 L3.5 5.2 L5.7 2.9" fill="none" stroke="#fff" stroke-width="0.9"/></svg></div>
<div class="ab" style="left:943.5px;top:550.09px;font-size:9.1px;line-height:11.83px;color:#606060;">55K views • 1 day ago</div>
<div class="ab" style="left:1130px;top:375px;width:208px;height:117px;border-radius:7px;overflow:hidden;background:#777"><svg style="position:absolute;left:0;top:0" width="100%" height="100%" viewBox="0 0 208 117" preserveAspectRatio="none"><rect width="208" height="117" fill="#765a40"/>
<g filter="url(#bl1)"><path d="M120 0 L208 0 L208 60 L150 40Z" fill="#8a6a4a"/><path d="M0 0 L12 0 L12 80 L0 85Z" fill="#dfe4e4"/><path d="M12 40 L60 55 L12 70Z" fill="#c8ccc8" opacity=".6"/>
<path d="M130 75 L208 68 L208 117 L150 117Z" fill="#6c5c4c"/><path d="M0 85 L60 70 L110 80 L70 117 L0 117Z" fill="#5e4632"/>
<path d="M12 0 L75 0 L70 30 L62 50 L30 48 L18 30Z" fill="#b48c6a"/>
<path d="M75 0 L112 0 L118 20 L140 45 L132 78 L118 86 L108 80 L118 48 L96 38 L80 45 L70 30Z" fill="#2e3e5c"/>
<path d="M132 15 L148 28 L156 48 L148 60 L140 45Z" fill="#4e3626"/><path d="M100 82 L120 84 L118 100 L98 98Z" fill="#4a3424"/><ellipse cx="118" cy="20" rx="6" ry="5" fill="#c8a088"/>
<path d="M45 50 L40 117 M70 52 L72 117 M45 95 L70 95" stroke="#b8c4cc" stroke-width="2.5" fill="none"/></g></svg></div>
<div class="ab" style="left:1308.0px;top:476.2px;width:27.0px;height:12.5px;border-radius:3px;background:rgba(0,0,0,.85);color:#fff;font-size:8.2px;line-height:14.6px;text-align:center;letter-spacing:-0.1px">35:12</div>
<div class="ab" style="left:1130px;top:500px;width:24px;height:24px;border-radius:12px;background:radial-gradient(ellipse 26% 32% at 50% 48%,#d8b8a0 0,#d8b8a0 80%,transparent 100%),radial-gradient(ellipse 36% 30% at 50% 30%,#2a2a2a 0,#2a2a2a 75%,transparent 100%),radial-gradient(ellipse 55% 35% at 50% 100%,#3a5a8a 0,#3a5a8a 80%,transparent 100%),#e8ecf0"></div>
<div class="ab" style="left:1163px;top:500.5px;font-size:9.9px;line-height:15px;color:#0f0f0f;font-weight:bold;white-space:nowrap">Travel Vlog: 48 Hours in<br>Tokyo</div>
<div class="ab" style="left:1163px;top:535.09px;font-size:9.1px;line-height:11.83px;color:#606060;">Wanderlust</div>
<div class="ab" style="left:1163px;top:550.09px;font-size:9.1px;line-height:11.83px;color:#606060;">600K views • 3 weeks ago</div>
<div class="ab" style="left:252px;top:583px;width:208px;height:117px;border-radius:7px;overflow:hidden;background:#777"><svg style="position:absolute;left:0;top:0" width="100%" height="100%" viewBox="0 0 208 117" preserveAspectRatio="none"><rect width="208" height="117" fill="#e0e2dc"/>
<g filter="url(#bl1)"><path d="M0 30 L20 20 L35 28 L55 15 L70 25 L95 8 L108 20 L110 117 L0 117Z" fill="#8a7c62"/><path d="M20 40 L40 60 L30 90 L10 80Z" fill="#a0825a" opacity=".6"/>
<path d="M104 117 L112 22 L122 0 L208 0 L208 117Z" fill="#9c8c72"/><path d="M118 60 L160 55 L150 117 L115 117Z" fill="#a0663a" opacity=".75"/><path d="M160 50 L185 40 L190 70 L165 75Z" fill="#c0a040" opacity=".55"/><path d="M125 20 L150 10 L160 30Z" fill="#b0a050" opacity=".5"/>
<path d="M140 0 L150 117 M175 10 L172 117" stroke="#5a5040" stroke-width="2.5" opacity=".6"/>
<path d="M0 117 L0 78 L25 65 L50 72 L75 60 L100 78 L112 117Z" fill="#35432a"/><path d="M40 20 L55 55 L70 20Z" fill="#4a6038" opacity=".7"/><path d="M190 0 L208 0 L208 40 L195 30Z" fill="#3a4a30"/></g></svg></div>
<div class="ab" style="left:434.5px;top:684.2px;width:22.5px;height:12.5px;border-radius:3px;background:rgba(0,0,0,.85);color:#fff;font-size:8.2px;line-height:14.6px;text-align:center;letter-spacing:-0.1px">9:59</div>
<div class="ab" style="left:252px;top:708px;width:24px;height:24px;border-radius:12px;background:radial-gradient(ellipse 26% 32% at 50% 48%,#a06850 0,#a06850 80%,transparent 100%),radial-gradient(ellipse 36% 30% at 50% 30%,#3a2018 0,#3a2018 75%,transparent 100%),radial-gradient(ellipse 55% 35% at 50% 100%,#d06080 0,#d06080 80%,transparent 100%),#e8d0c8"></div>
<div class="ab" style="left:285px;top:708.5px;font-size:9.9px;line-height:15px;color:#0f0f0f;font-weight:bold;white-space:nowrap">Is AI going to replace<br>programmers?</div>
<div class="ab" style="left:285px;top:743.09px;font-size:9.1px;line-height:11.83px;color:#606060;">Tech Talk Daily<svg style="display:inline-block;position:relative;left:3px;top:1px" width="8" height="8" viewBox="0 0 8 8"><circle cx="4" cy="4" r="3.6" fill="#606060"/><path d="M2.3 4.1 L3.5 5.2 L5.7 2.9" fill="none" stroke="#fff" stroke-width="0.9"/></svg></div>
<div class="ab" style="left:285px;top:758.09px;font-size:9.1px;line-height:11.83px;color:#606060;">1.5M views • 4 days ago</div>
<div class="ab" style="left:471.5px;top:583px;width:208px;height:117px;border-radius:7px;overflow:hidden;background:#777"><svg style="position:absolute;left:0;top:0" width="100%" height="100%" viewBox="0 0 208 117" preserveAspectRatio="none"><defs><linearGradient id="g32" x1="0" y1="0" x2="1" y2="0"><stop offset="0" stop-color="#3e6878"/><stop offset="1" stop-color="#5e96a8"/></linearGradient>
<pattern id="g32p" width="9" height="8" patternUnits="userSpaceOnUse"><rect width="9" height="8" fill="#4e3e3a"/><rect x="1" y="1" width="3" height="3" fill="#2a2228"/><rect x="5" y="4" width="3" height="3" fill="#6a5048"/></pattern></defs>
<rect width="208" height="117" fill="url(#g32)"/>
<g filter="url(#bl1)"><rect x="160" y="72" width="48" height="45" fill="#2a5a6c"/>
<path d="M0 0 L105 0 L110 12 L120 20 L135 35 L150 60 L165 80 L178 117 L0 117Z" fill="url(#g32p)"/>
<path d="M18 12 L48 10 L50 35 L20 37Z" fill="#7a4a40" opacity=".8"/><path d="M40 40 L80 38 L82 58 L42 60Z" fill="#8a7058" opacity=".7"/><path d="M70 15 L98 14 L100 30 L72 32Z" fill="#8a5048" opacity=".7"/><path d="M95 30 L118 30 L122 48 L98 48Z" fill="#b09058" opacity=".8"/><path d="M5 45 L30 45 L30 75 L5 75Z" fill="#3a2e30"/><path d="M50 65 L90 62 L92 90 L52 92Z" fill="#7a4a44" opacity=".8"/><path d="M100 55 L125 55 L128 75 L102 75Z" fill="#8a7a60" opacity=".7"/><path d="M25 90 L60 88 L62 105 L28 107Z" fill="#b46848" opacity=".85"/><path d="M65 98 L100 96 L100 117 L65 117Z" fill="#a08060" opacity=".8"/>
<path d="M125 60 L160 70 L175 117 L120 117Z" fill="#3e3a38"/><path d="M0 105 L60 108 L60 117 L0 117Z" fill="#2a2222"/></g></svg></div>
<div class="ab" style="left:649.5px;top:684.2px;width:27.0px;height:12.5px;border-radius:3px;background:rgba(0,0,0,.85);color:#fff;font-size:8.2px;line-height:14.6px;text-align:center;letter-spacing:-0.1px">55:00</div>
<div class="ab" style="left:471.5px;top:708px;width:24px;height:24px;border-radius:12px;background:radial-gradient(ellipse 26% 32% at 50% 48%,#c8a088 0,#c8a088 80%,transparent 100%),radial-gradient(ellipse 36% 30% at 50% 30%,#1a1a1a 0,#1a1a1a 75%,transparent 100%),radial-gradient(ellipse 55% 35% at 50% 100%,#2a2a2a 0,#2a2a2a 80%,transparent 100%),#2a5a5a"></div>
<div class="ab" style="left:504.5px;top:708.5px;font-size:9.9px;line-height:15px;color:#0f0f0f;font-weight:bold;white-space:nowrap">Deep Focus Music for<br>Coding</div>
<div class="ab" style="left:504.5px;top:743.09px;font-size:9.1px;line-height:11.83px;color:#606060;">MindsetFM<svg style="display:inline-block;position:relative;left:3px;top:1px" width="8" height="8" viewBox="0 0 8 8"><circle cx="4" cy="4" r="3.6" fill="#606060"/><path d="M2.3 4.1 L3.5 5.2 L5.7 2.9" fill="none" stroke="#fff" stroke-width="0.9"/></svg></div>
<div class="ab" style="left:504.5px;top:758.09px;font-size:9.1px;line-height:11.83px;color:#606060;">10M views • 2 years ago</div>
</div></div>
<div class="p" style="left:1397px;top:68px;width:1301px;height:731px;border-radius:7px;background:#0b0e14">
<div style="position:absolute;left:-1397px;top:-68px;width:4096px;height:868px">
<div class="ab" style="left:2689px;top:68px;width:9.5px;height:731px;background:#2c2c2e"></div>
<div class="ab" style="left:2690px;top:79px;width:8px;height:556px;background:#a3a3a3;border-radius:4px"></div>
<svg style="left:2690px;top:70px" width="8" height="7"><path d="M4 1 L7.5 6 L0.5 6Z" fill="#a3a3a3"/></svg>
<svg style="left:2690px;top:791px" width="8" height="7"><path d="M0.5 1 L7.5 1 L4 6Z" fill="#a3a3a3"/></svg>
<div class="ab" style="left:1397px;top:110px;width:1292px;height:1px;background:#1a202b"></div>
<div class="ab" style="left:1448px;top:111px;width:1px;height:688px;background:#1a202b"></div>
<div class="ab" style="left:1449px;top:147px;width:1240px;height:1px;background:#1a202b"></div>
<div class="ab" style="left:1408px;top:77px;width:24.3px;height:24.5px;border-radius:6px;background:#8e69f6"></div>
<svg style="left:1416px;top:85px" width="9" height="9" viewBox="0 0 9 9"><path d="M1.8 1.6 L7 4.5 L1.8 7.4Z" fill="#f2ecff"/></svg>
<div class="ab" style="left:1439px;top:82.95px;font-size:9.3px;line-height:12.09px;color:#f1f5f9;font-weight:bold;">StreamBoard</div>
<div class="ab" style="left:1505.3px;top:82px;width:95px;height:13.8px;border-radius:7px;border:1px solid #232a38"></div>
<div class="ab" style="left:1512px;top:84.19px;font-size:7.4px;line-height:9.62px;color:#a3aab8;">Demo UI — Not YouTube</div>
<div class="ab" style="left:1613px;top:77.4px;width:402px;height:24.2px;border-radius:12px;background:#0f1728;border:1px solid #1c2436"></div>
<svg style="left:1622.5px;top:83px" width="12" height="12" viewBox="0 0 12 12"><path d="M6.5 2 A3.6 3.6 0 1 0 6.6 9.2" fill="none" stroke="#f1f5f9" stroke-width="1.8"/><path d="M6.5 2 A3.6 3.6 0 0 1 6.6 9.2 L8.6 11" fill="none" stroke="#f1f5f9" stroke-width="1.8"/></svg>
<div class="ab" style="left:1639px;top:83.26px;font-size:9.6px;line-height:12.48px;color:#7b8494;">Search videos</div>
<div class="ab" style="left:2020px;top:77.4px;width:64px;height:24.2px;border-radius:12px;background:#0f1728;border:1px solid #1c2436"></div>
<svg style="left:2031.5px;top:83px" width="12" height="12" viewBox="0 0 12 12"><path d="M6.5 2 A3.6 3.6 0 1 0 6.6 9.2" fill="none" stroke="#f1f5f9" stroke-width="1.8"/><path d="M6.5 2 A3.6 3.6 0 0 1 6.6 9.2 L8.6 11" fill="none" stroke="#f1f5f9" stroke-width="1.8"/></svg>
<div class="ab" style="left:2046.5px;top:83.72px;font-size:8.9px;line-height:11.57px;color:#f1f5f9;">Search</div>
<div class="ab" style="left:2089px;top:77.4px;width:25px;height:24.2px;border-radius:7px;background:#0f1728;border:1px solid #1c2436"></div>
<svg style="left:2095.5px;top:83px" width="12" height="12" viewBox="0 0 12 12"><rect x="4.2" y="1.2" width="3.6" height="6" rx="1.8" fill="#e2e8f0"/><path d="M2.6 6.2 Q2.6 9.6 6 9.6 Q9.4 9.6 9.4 6.2" fill="none" stroke="#e2e8f0" stroke-width="1.3"/><path d="M6 9.6 V11" stroke="#e2e8f0" stroke-width="1.2"/></svg>
<div class="ab" style="left:2567.3px;top:77px;width:23.5px;height:24.5px;border-radius:7px;background:#0f1728;border:1px solid #1a2232"></div>
<div class="ab" style="left:2597px;top:77px;width:23.5px;height:24.5px;border-radius:7px;background:#0f1728;border:1px solid #1a2232"></div>
<div class="ab" style="left:2626.7px;top:77px;width:23.5px;height:24.5px;border-radius:7px;background:#0f1728;border:1px solid #1a2232"></div>
<svg style="left:2573px;top:83px" width="12" height="12" viewBox="0 0 12 12"><path d="M6 2.5 V9.5 M2.5 6 H9.5" stroke="#e5e7eb" stroke-width="1.4"/></svg>
<svg style="left:2603px;top:83px" width="12" height="12" viewBox="0 0 12 12"><path d="M1.5 9 H10.5 L9.4 7.6 V5.6 Q9.4 2 6 2 Q2.6 2 2.6 5.6 V7.6Z" fill="#f1f5f9"/><path d="M5 10 Q6 11.2 7 10" stroke="#f1f5f9" stroke-width="1"/></svg>
<svg style="left:2632.5px;top:83px" width="12" height="12" viewBox="0 0 12 12"><g fill="#e5e7eb"><rect x="2" y="2" width="1.3" height="1.3"/><rect x="5.4" y="2" width="1.3" height="1.3"/><rect x="8.7" y="2" width="1.3" height="1.3"/><rect x="2" y="5.4" width="1.3" height="1.3"/><rect x="8.7" y="5.4" width="1.3" height="1.3"/><rect x="2" y="8.7" width="1.3" height="1.3"/><rect x="5.4" y="8.7" width="1.3" height="1.3"/><rect x="8.7" y="8.7" width="1.3" height="1.3"/></g></svg>
<div class="ab" style="left:2657.4px;top:77.5px;width:20.5px;height:21.5px;border-radius:11px;background:radial-gradient(circle at 50% 45%,#c8c8c8 0%,#8a8a8a 35%,#2a2a2a 70%,#111 100%)"></div>
<svg style="left:1416.5px;top:131.8px" width="12" height="12" viewBox="0 0 12 12"><path d="M1 6 L6 1.5 L11 6 V11 H7.3 V8 H4.7 V11 H1Z" fill="#f1f5f9"/></svg>
<div class="ab" style="left:1397px;width:51px;text-align:center;top:152.0px;font-size:7.3px;line-height:11px;color:#c3cad6">Home</div>
<svg style="left:1416.5px;top:182.5px" width="12" height="12" viewBox="0 0 12 12"><g transform="rotate(-25 6 6)"><rect x="2.2" y="2.2" width="7.6" height="7.6" rx="1" fill="#f1f5f9"/><circle cx="6" cy="6" r="1.2" fill="#0b0e14"/></g></svg>
<div class="ab" style="left:1397px;width:51px;text-align:center;top:203.5px;font-size:7.3px;line-height:11px;color:#c3cad6">Explore</div>
<svg style="left:1416.5px;top:233.8px" width="12" height="12" viewBox="0 0 12 12"><path d="M1.5 2.5 H10.5 M1.5 5.5 H10.5 M1.5 8.5 H7.5" stroke="#f1f5f9" stroke-width="1.3"/></svg>
<div class="ab" style="left:1397px;width:51px;text-align:center;top:254.5px;font-size:7.3px;line-height:11px;color:#c3cad6">Subs</div>
<svg style="left:1416.5px;top:285px" width="12" height="12" viewBox="0 0 12 12"><rect x="1.5" y="4" width="9" height="6.5" fill="none" stroke="#f1f5f9" stroke-width="1.1"/><path d="M2.8 2 H9.2" stroke="#f1f5f9" stroke-width="1.1"/></svg>
<div class="ab" style="left:1397px;width:51px;text-align:center;top:305.5px;font-size:7.3px;line-height:11px;color:#c3cad6">Library</div>
<div class="ab" style="left:1459.5px;top:117.8px;width:29.3px;height:22.4px;border-radius:11px;background:#8b5cf6;color:#1e1538;border:0;font-size:9px;font-weight:bold;line-height:21.5px;text-align:center">All</div>
<div class="ab" style="left:1494px;top:117.8px;width:51.0px;height:22.4px;border-radius:11px;background:#131a28;color:#eef2f7;border:1px solid #1a2232;font-size:9px;font-weight:bold;line-height:20px;text-align:center">Gaming</div>
<div class="ab" style="left:1551px;top:117.8px;width:43.0px;height:22.4px;border-radius:11px;background:#131a28;color:#eef2f7;border:1px solid #1a2232;font-size:9px;font-weight:bold;line-height:20px;text-align:center">Music</div>
<div class="ab" style="left:1599px;top:117.8px;width:52.0px;height:22.4px;border-radius:11px;background:#131a28;color:#eef2f7;border:1px solid #1a2232;font-size:9px;font-weight:bold;line-height:20px;text-align:center">Science</div>
<div class="ab" style="left:1656.7px;top:117.8px;width:41.0px;height:22.4px;border-radius:11px;background:#131a28;color:#eef2f7;border:1px solid #1a2232;font-size:9px;font-weight:bold;line-height:20px;text-align:center">News</div>
<div class="ab" style="left:1703px;top:117.8px;width:46.5px;height:22.4px;border-radius:11px;background:#131a28;color:#eef2f7;border:1px solid #1a2232;font-size:9px;font-weight:bold;line-height:20px;text-align:center">Sports</div>
<div class="ab" style="left:1755px;top:117.8px;width:35.0px;height:22.4px;border-radius:11px;background:#131a28;color:#eef2f7;border:1px solid #1a2232;font-size:9px;font-weight:bold;line-height:20px;text-align:center">Live</div>
<div class="ab" style="left:1796px;top:117.8px;width:58.0px;height:22.4px;border-radius:11px;background:#131a28;color:#eef2f7;border:1px solid #1a2232;font-size:9px;font-weight:bold;line-height:20px;text-align:center">Podcasts</div>
<div class="ab" style="left:1859.5px;top:117.8px;width:46.9px;height:22.4px;border-radius:11px;background:#131a28;color:#eef2f7;border:1px solid #1a2232;font-size:9px;font-weight:bold;line-height:20px;text-align:center">Design</div>
<div class="ab" style="left:1912px;top:117.8px;width:33.0px;height:22.4px;border-radius:11px;background:#131a28;color:#eef2f7;border:1px solid #1a2232;font-size:9px;font-weight:bold;line-height:20px;text-align:center">DIY</div>
<div class="ab" style="left:1951px;top:117.8px;width:48.7px;height:22.4px;border-radius:11px;background:#131a28;color:#eef2f7;border:1px solid #1a2232;font-size:9px;font-weight:bold;line-height:20px;text-align:center">History</div>
<div class="ab" style="left:2005px;top:117.8px;width:61.0px;height:22.4px;border-radius:11px;background:#131a28;color:#eef2f7;border:1px solid #1a2232;font-size:9px;font-weight:bold;line-height:20px;text-align:center">Education</div>
<div class="ab" style="left:2071.8px;top:117.8px;width:42.8px;height:22.4px;border-radius:11px;background:#131a28;color:#eef2f7;border:1px solid #1a2232;font-size:9px;font-weight:bold;line-height:20px;text-align:center">Travel</div>
<div class="ab" style="left:2120px;top:117.8px;width:39.0px;height:22.4px;border-radius:11px;background:#131a28;color:#eef2f7;border:1px solid #1a2232;font-size:9px;font-weight:bold;line-height:20px;text-align:center">Tech</div>
<div class="ab" style="left:2164.6px;top:117.8px;width:35.4px;height:22.4px;border-radius:11px;background:#131a28;color:#eef2f7;border:1px solid #1a2232;font-size:9px;font-weight:bold;line-height:20px;text-align:center">Film</div>
<div class="ab" style="left:2206px;top:117.8px;width:53.0px;height:22.4px;border-radius:11px;background:#131a28;color:#eef2f7;border:1px solid #1a2232;font-size:9px;font-weight:bold;line-height:20px;text-align:center">Comedy</div>
<div class="ab" style="left:2265px;top:117.8px;width:53.5px;height:22.4px;border-radius:11px;background:#131a28;color:#eef2f7;border:1px solid #1a2232;font-size:9px;font-weight:bold;line-height:20px;text-align:center">Cooking</div>
<div class="ab" style="left:2324px;top:117.8px;width:54.0px;height:22.4px;border-radius:11px;background:#131a28;color:#eef2f7;border:1px solid #1a2232;font-size:9px;font-weight:bold;line-height:20px;text-align:center">Lifestyle</div>
<div class="ab" style="left:1459.5px;top:158.5px;width:193px;height:182px;border-radius:7px;background:#0f1626;border:1px solid #1a2133;overflow:hidden"><div style="position:absolute;left:-1px;top:-1px;width:193px;height:108px;overflow:hidden;background:#445"><svg style="position:absolute;left:0;top:0" width="193" height="108" viewBox="0 0 193 108"><defs><linearGradient id="k11" x1="0" y1="0" x2="0" y2="1"><stop offset="0" stop-color="#8cbce0"/><stop offset=".4" stop-color="#d8e4ec"/></linearGradient>
<linearGradient id="k11v" x1="0" y1="0" x2="1" y2="1"><stop offset="0" stop-color="#4a6a3c"/><stop offset=".5" stop-color="#3c5a30"/><stop offset="1" stop-color="#5a7a48"/></linearGradient></defs>
<rect width="193" height="108" fill="url(#k11)"/>
<g filter="url(#bl2)"><ellipse cx="100" cy="28" rx="22" ry="8" fill="#f0f4f6" opacity=".8"/></g>
<g filter="url(#bl1)"><path d="M92 45 L125 28 L150 24 L193 16 L193 108 L110 108Z" fill="#6e747a"/><path d="M115 60 L150 40 L193 24 L193 108 L120 108Z" fill="#262c26"/>
<path d="M0 0 L45 0 L70 18 L95 40 L118 62 L140 85 L162 108 L0 108Z" fill="url(#k11v)"/><path d="M0 60 L30 62 L60 80 L0 90Z" fill="#8a9684" opacity=".6"/>
<path d="M64 88 Q78 72 92 88 L92 96 L64 96Z" fill="#8a8a84"/><ellipse cx="78" cy="90" rx="8" ry="7" fill="#141616"/>
<path d="M0 108 L0 98 Q40 94 80 96 L95 100 L75 108Z" fill="#3a3c3e"/><path d="M80 100 L120 102 L135 108 L80 108Z" fill="#d0d0cc"/><path d="M42 108 Q55 100 70 98" stroke="#d8c060" stroke-width="1.2" fill="none"/></g></svg></div></div>
<div class="ab" style="left:1621.4px;top:246.0px;width:25.6px;height:14.5px;border-radius:7px;background:rgba(10,14,24,.78);color:#f1f5f9;font-size:8.1px;line-height:16.5px;text-align:center">4:37</div>
<div class="ab" style="left:1468.5px;top:275.0px;width:26.5px;height:26.5px;border-radius:14px;background:radial-gradient(ellipse 26% 32% at 50% 48%,#d0b0a0 0,#d0b0a0 80%,transparent 100%),radial-gradient(ellipse 36% 30% at 50% 30%,#2a2a30 0,#2a2a30 75%,transparent 100%),radial-gradient(ellipse 55% 35% at 50% 100%,#3a4a6a 0,#3a4a6a 80%,transparent 100%),#c8c8d0"></div>
<div class="ab" style="left:1503.5px;top:274.1px;font-size:9.4px;line-height:13.9px;color:#f8fafc;font-weight:bold">10 Tiny Habits that<br>Changed My Life</div>
<div class="ab" style="left:1503.5px;top:304.5px;font-size:8.1px;line-height:11px;color:#a6aebb;white-space:pre">Clarity Labs  •  100K views  •</div>
<div class="ab" style="left:1503.5px;top:321.5px;font-size:8.1px;line-height:11px;color:#a6aebb;white-space:pre">9 days ago</div>
<svg style="left:1633.0px;top:277.5px" width="4" height="12" viewBox="0 0 4 12"><circle cx="2" cy="2" r="0.9" fill="#cbd5e1"/><circle cx="2" cy="6" r="0.9" fill="#cbd5e1"/><circle cx="2" cy="10" r="0.9" fill="#cbd5e1"/></svg>
<div class="ab" style="left:1664.8px;top:158.5px;width:193px;height:182px;border-radius:7px;background:#0f1626;border:1px solid #1a2133;overflow:hidden"><div style="position:absolute;left:-1px;top:-1px;width:193px;height:108px;overflow:hidden;background:#445"><svg style="position:absolute;left:0;top:0" width="193" height="108" viewBox="0 0 193 108"><defs><radialGradient id="k12" cx=".52" cy=".42" r=".6"><stop offset="0" stop-color="#fbfbf8"/><stop offset=".45" stop-color="#d6d8dc"/><stop offset="1" stop-color="#9aa0ac"/></radialGradient></defs>
<rect width="193" height="108" fill="url(#k12)"/>
<g filter="url(#bl2)"><path d="M15 0 L110 0 Q80 15 60 25 Q40 35 20 40Z" fill="#2c3a74"/><path d="M110 0 L193 0 L193 10 L150 5Z" fill="#9aa2b8" opacity=".6"/></g>
<g filter="url(#bl1)"><path d="M0 108 L0 0 L15 0 L22 40 L28 70 L40 80 L50 55 L60 85 L70 65 L75 35 L78 75 L88 60 L92 45 L98 70 L110 80 L120 35 L128 60 L135 80 L150 70 L160 60 L175 85 L193 75 L193 108Z" fill="#1a2022"/>
<path d="M0 95 L193 88 L193 108 L0 108Z" fill="#242a2c"/><path d="M140 45 L193 80" stroke="#2a3030" stroke-width="2.5"/></g></svg></div></div>
<div class="ab" style="left:1826.7px;top:246.0px;width:25.6px;height:14.5px;border-radius:7px;background:rgba(10,14,24,.78);color:#f1f5f9;font-size:8.1px;line-height:16.5px;text-align:center">4:00</div>
<div class="ab" style="left:1673.8px;top:275.0px;width:26.5px;height:26.5px;border-radius:14px;background:radial-gradient(ellipse 26% 32% at 50% 48%,#e0c0a8 0,#e0c0a8 80%,transparent 100%),radial-gradient(ellipse 36% 30% at 50% 30%,#2a2420 0,#2a2420 75%,transparent 100%),radial-gradient(ellipse 55% 35% at 50% 100%,#5a8a9a 0,#5a8a9a 80%,transparent 100%),#7a9090"></div>
<div class="ab" style="left:1708.8px;top:274.1px;font-size:9.4px;line-height:13.9px;color:#f8fafc;font-weight:bold">Building a Custom<br>Mechanical Keyboard...</div>
<div class="ab" style="left:1708.8px;top:304.5px;font-size:8.1px;line-height:11px;color:#a6aebb;white-space:pre">Pixel Pantry  •  824K views  •</div>
<div class="ab" style="left:1708.8px;top:321.5px;font-size:8.1px;line-height:11px;color:#a6aebb;white-space:pre">33 hours ago</div>
<svg style="left:1838.3px;top:277.5px" width="4" height="12" viewBox="0 0 4 12"><circle cx="2" cy="2" r="0.9" fill="#cbd5e1"/><circle cx="2" cy="6" r="0.9" fill="#cbd5e1"/><circle cx="2" cy="10" r="0.9" fill="#cbd5e1"/></svg>
<div class="ab" style="left:1870.1px;top:158.5px;width:193px;height:182px;border-radius:7px;background:#0f1626;border:1px solid #1a2133;overflow:hidden"><div style="position:absolute;left:-1px;top:-1px;width:193px;height:108px;overflow:hidden;background:#445"><svg style="position:absolute;left:0;top:0" width="193" height="108" viewBox="0 0 193 108"><defs><linearGradient id="k13" x1="0" y1="0" x2="0" y2="1"><stop offset="0" stop-color="#5a8a48"/><stop offset=".45" stop-color="#4c9a3c"/><stop offset="1" stop-color="#3a8a38"/></linearGradient></defs>
<rect width="193" height="108" fill="url(#k13)"/>
<g filter="url(#bl1)"><path d="M90 0 L193 0 L193 30 L150 28 L100 10Z" fill="#7aa0a0" opacity=".8"/><path d="M120 0 L193 0 L193 12 L130 10Z" fill="#3a5a3a" opacity=".5"/>
<path d="M0 3 Q30 0 70 18 Q95 30 108 50 Q106 62 90 60 Q65 50 40 52 Q15 55 0 50Z" fill="#8a4a28"/>
<path d="M45 5 Q90 3 125 22 Q145 32 148 48 Q138 52 120 42 Q95 30 70 24Z" fill="#7c4224"/>
<ellipse cx="95" cy="52" rx="14" ry="10" fill="#9a5430"/><ellipse cx="138" cy="44" rx="10" ry="8" fill="#8a4a2a"/>
<path d="M0 62 L193 55 L193 108 L0 108Z" fill="#7ac068" opacity=".45"/><path d="M0 80 Q80 72 193 78 L193 108 L0 108Z" fill="#a8e09a" opacity=".3"/></g></svg></div></div>
<div class="ab" style="left:2032.0px;top:246.0px;width:25.6px;height:14.5px;border-radius:7px;background:rgba(10,14,24,.78);color:#f1f5f9;font-size:8.1px;line-height:16.5px;text-align:center">7:27</div>
<div class="ab" style="left:1879.1px;top:275.0px;width:26.5px;height:26.5px;border-radius:14px;background:radial-gradient(ellipse 26% 32% at 50% 48%,#d0b8a8 0,#d0b8a8 80%,transparent 100%),radial-gradient(ellipse 36% 30% at 50% 30%,#c0b0a0 0,#c0b0a0 75%,transparent 100%),radial-gradient(ellipse 55% 35% at 50% 100%,#4a4a50 0,#4a4a50 80%,transparent 100%),#b8c8d8"></div>
<div class="ab" style="left:1914.1px;top:274.1px;font-size:9.4px;line-height:13.9px;color:#f8fafc;font-weight:bold">I Tried Learning Piano in<br>30 Days</div>
<div class="ab" style="left:1914.1px;top:304.5px;font-size:8.1px;line-height:11px;color:#a6aebb;white-space:pre">Code &amp; Coffee  •  528K views</div>
<div class="ab" style="left:1914.1px;top:321.5px;font-size:8.1px;line-height:11px;color:#a6aebb;white-space:pre">•  14 days ago</div>
<svg style="left:2043.6px;top:277.5px" width="4" height="12" viewBox="0 0 4 12"><circle cx="2" cy="2" r="0.9" fill="#cbd5e1"/><circle cx="2" cy="6" r="0.9" fill="#cbd5e1"/><circle cx="2" cy="10" r="0.9" fill="#cbd5e1"/></svg>
<div class="ab" style="left:2075.4px;top:158.5px;width:193px;height:182px;border-radius:7px;background:#0f1626;border:1px solid #1a2133;overflow:hidden"><div style="position:absolute;left:-1px;top:-1px;width:193px;height:108px;overflow:hidden;background:#445"><svg style="position:absolute;left:0;top:0" width="193" height="108" viewBox="0 0 193 108"><defs><linearGradient id="k14" x1="0" y1="0" x2="0" y2="1"><stop offset="0" stop-color="#c6d6d8"/><stop offset=".35" stop-color="#9ab4ba"/><stop offset=".5" stop-color="#8aaeb0"/><stop offset="1" stop-color="#8cb0b0"/></linearGradient></defs>
<rect width="193" height="108" fill="url(#k14)"/>
<g filter="url(#bl2)"><path d="M0 25 Q80 18 193 28 L193 40 Q90 35 0 42Z" fill="#7a9aa4" opacity=".5"/></g>
<g filter="url(#bl1)"><path d="M108 108 L112 50 Q114 32 130 32 Q145 34 147 55 L152 108Z" fill="#2e2624"/><path d="M103 108 L106 85 Q115 76 126 80 L130 108Z" fill="#e8e2da"/>
<path d="M0 52 Q60 48 146 44 L147 57 Q60 62 0 68Z" fill="#66848a"/></g></svg></div></div>
<div class="ab" style="left:2237.3px;top:246.0px;width:25.6px;height:14.5px;border-radius:7px;background:rgba(10,14,24,.78);color:#f1f5f9;font-size:8.1px;line-height:16.5px;text-align:center">5:38</div>
<div class="ab" style="left:2084.4px;top:275.0px;width:26.5px;height:26.5px;border-radius:14px;background:radial-gradient(ellipse 26% 32% at 50% 48%,#e8c8a8 0,#e8c8a8 80%,transparent 100%),radial-gradient(ellipse 36% 30% at 50% 30%,#5a4030 0,#5a4030 75%,transparent 100%),radial-gradient(ellipse 55% 35% at 50% 100%,#3a5a8a 0,#3a5a8a 80%,transparent 100%),#88a870"></div>
<div class="ab" style="left:2119.4px;top:274.1px;font-size:9.4px;line-height:13.9px;color:#f8fafc;font-weight:bold">The Untold Story of the<br>Voyager Missions</div>
<div class="ab" style="left:2119.4px;top:304.5px;font-size:8.1px;line-height:11px;color:#a6aebb;white-space:pre">Midnight Mechanics  •</div>
<div class="ab" style="left:2119.4px;top:321.5px;font-size:8.1px;line-height:11px;color:#a6aebb;white-space:pre">191K views  •  25 days ago</div>
<svg style="left:2248.9px;top:277.5px" width="4" height="12" viewBox="0 0 4 12"><circle cx="2" cy="2" r="0.9" fill="#cbd5e1"/><circle cx="2" cy="6" r="0.9" fill="#cbd5e1"/><circle cx="2" cy="10" r="0.9" fill="#cbd5e1"/></svg>
<div class="ab" style="left:2280.7px;top:158.5px;width:193px;height:182px;border-radius:7px;background:#0f1626;border:1px solid #1a2133;overflow:hidden"><div style="position:absolute;left:-1px;top:-1px;width:193px;height:108px;overflow:hidden;background:#445"><svg style="position:absolute;left:0;top:0" width="193" height="108" viewBox="0 0 193 108"><defs><linearGradient id="k15" x1="0" y1="0" x2="0" y2="1"><stop offset="0" stop-color="#1c2638"/><stop offset=".38" stop-color="#2e3a4a"/><stop offset=".45" stop-color="#6e6c68"/><stop offset="1" stop-color="#a8a6a0"/></linearGradient></defs>
<rect width="193" height="108" fill="url(#k15)"/>
<g filter="url(#bl2)"><rect x="62" y="0" width="70" height="40" fill="#3e4a5c" opacity=".8"/><ellipse cx="96" cy="85" rx="60" ry="20" fill="#c8c4bc" opacity=".5"/></g>
<g filter="url(#bl1)"><path d="M54 32 Q96 24 140 32 L146 55 Q138 64 124 58 L118 52 L76 52 L70 58 Q56 64 50 55Z" fill="#1a1e26"/>
<ellipse cx="74" cy="36" rx="9" ry="2.5" fill="#8a9098"/><ellipse cx="118" cy="36" rx="9" ry="2.5" fill="#8a9098"/><circle cx="98" cy="44" r="1.5" fill="#ff3030"/>
<ellipse cx="96" cy="64" rx="48" ry="5" fill="#2a2a2e" opacity=".7"/><path d="M95 66 L99 66 L101 108 L93 108Z" fill="#e05050" opacity=".35"/></g></svg></div></div>
<div class="ab" style="left:2438.2px;top:246.0px;width:30.0px;height:14.5px;border-radius:7px;background:rgba(10,14,24,.78);color:#f1f5f9;font-size:8.1px;line-height:16.5px;text-align:center">14:45</div>
<div class="ab" style="left:2289.7px;top:275.0px;width:26.5px;height:26.5px;border-radius:14px;background:radial-gradient(ellipse 26% 32% at 50% 48%,#e8c0b0 0,#e8c0b0 80%,transparent 100%),radial-gradient(ellipse 36% 30% at 50% 30%,#6a3a28 0,#6a3a28 75%,transparent 100%),radial-gradient(ellipse 55% 35% at 50% 100%,#8a8a8a 0,#8a8a8a 80%,transparent 100%),#d0d0d0"></div>
<div class="ab" style="left:2324.7px;top:274.1px;font-size:9.4px;line-height:13.9px;color:#f8fafc;font-weight:bold">Can You Survive on $1 a<br>Day? Experiment</div>
<div class="ab" style="left:2324.7px;top:304.5px;font-size:8.1px;line-height:11px;color:#a6aebb;white-space:pre">Studio Saturday  •  824K views</div>
<div class="ab" style="left:2324.7px;top:321.5px;font-size:8.1px;line-height:11px;color:#a6aebb;white-space:pre">•  43 hours ago</div>
<svg style="left:2454.2px;top:277.5px" width="4" height="12" viewBox="0 0 4 12"><circle cx="2" cy="2" r="0.9" fill="#cbd5e1"/><circle cx="2" cy="6" r="0.9" fill="#cbd5e1"/><circle cx="2" cy="10" r="0.9" fill="#cbd5e1"/></svg>
<div class="ab" style="left:2486.0px;top:158.5px;width:193px;height:182px;border-radius:7px;background:#0f1626;border:1px solid #1a2133;overflow:hidden"><div style="position:absolute;left:-1px;top:-1px;width:193px;height:108px;overflow:hidden;background:#445"><svg style="position:absolute;left:0;top:0" width="193" height="108" viewBox="0 0 193 108"><rect width="193" height="108" fill="#4a6434"/>
<g filter="url(#bl2)"><ellipse cx="90" cy="22" rx="45" ry="22" fill="#d4dccc" opacity=".7"/><ellipse cx="150" cy="12" rx="25" ry="12" fill="#e0e6dc" opacity=".6"/><ellipse cx="40" cy="30" rx="15" ry="10" fill="#c8d4c4" opacity=".5"/><ellipse cx="120" cy="55" rx="15" ry="8" fill="#c8d4c4" opacity=".4"/></g>
<g filter="url(#bl1)" stroke-linecap="round"><path d="M90 15 L40 108 M90 15 L75 108 M90 15 L105 108 M90 15 L140 108 M90 15 L193 90 M90 15 L0 60 M90 15 L193 25" stroke="#6a5a3c" stroke-width="4" opacity=".75"/>
<path d="M193 20 L120 10 L125 0 L193 0Z" fill="#5a4a30" opacity=".7"/><path d="M0 108 L0 70 L40 108Z" fill="#34502a"/><path d="M193 60 L193 108 L150 108Z" fill="#3a5628"/></g></svg></div></div>
<div class="ab" style="left:2643.5px;top:246.0px;width:30.0px;height:14.5px;border-radius:7px;background:rgba(10,14,24,.78);color:#f1f5f9;font-size:8.1px;line-height:16.5px;text-align:center">13:16</div>
<div class="ab" style="left:2495.0px;top:275.0px;width:26.5px;height:26.5px;border-radius:14px;background:radial-gradient(ellipse 26% 32% at 50% 48%,#e0c8b0 0,#e0c8b0 80%,transparent 100%),radial-gradient(ellipse 36% 30% at 50% 30%,#a08070 0,#a08070 75%,transparent 100%),radial-gradient(ellipse 55% 35% at 50% 100%,#c0c0c0 0,#c0c0c0 80%,transparent 100%),#f0f0f0"></div>
<div class="ab" style="left:2530.0px;top:274.1px;font-size:9.4px;line-height:13.9px;color:#f8fafc;font-weight:bold">Top 20 VS Code<br>Extensions for 2025</div>
<div class="ab" style="left:2530.0px;top:304.5px;font-size:8.1px;line-height:11px;color:#a6aebb;white-space:pre">Curious Cosmos  •  166K views</div>
<div class="ab" style="left:2530.0px;top:321.5px;font-size:8.1px;line-height:11px;color:#a6aebb;white-space:pre">•  40 days ago</div>
<svg style="left:2659.5px;top:277.5px" width="4" height="12" viewBox="0 0 4 12"><circle cx="2" cy="2" r="0.9" fill="#cbd5e1"/><circle cx="2" cy="6" r="0.9" fill="#cbd5e1"/><circle cx="2" cy="10" r="0.9" fill="#cbd5e1"/></svg>
<div class="ab" style="left:1459.5px;top:353.2px;width:193px;height:182px;border-radius:7px;background:#0f1626;border:1px solid #1a2133;overflow:hidden"><div style="position:absolute;left:-1px;top:-1px;width:193px;height:108px;overflow:hidden;background:#445"><svg style="position:absolute;left:0;top:0" width="193" height="108" viewBox="0 0 193 108"><defs><linearGradient id="k21" x1="0" y1="0" x2="1" y2="0"><stop offset="0" stop-color="#5e5e5e"/><stop offset=".15" stop-color="#8a8a8a"/><stop offset=".3" stop-color="#727272"/><stop offset=".5" stop-color="#8e8e8e"/><stop offset=".7" stop-color="#7a7a7a"/><stop offset=".85" stop-color="#969696"/><stop offset="1" stop-color="#787878"/></linearGradient>
<pattern id="k21p" width="6" height="5" patternUnits="userSpaceOnUse"><rect width="6" height="5" fill="#262626"/><ellipse cx="3" cy="2.5" rx="2.4" ry="1.7" fill="#d0d0d0"/></pattern></defs>
<rect width="193" height="108" fill="url(#k21)"/>
<g stroke="#a8a8a8" stroke-width="1.5" opacity=".45" filter="url(#bl1)"><path d="M12 0 L8 108 M30 0 L34 108 M55 0 L50 108 M160 0 L165 108 M180 0 L176 108"/></g>
<g filter="url(#bl1)"><ellipse cx="62" cy="50" rx="24" ry="17" fill="url(#k21p)" transform="rotate(-10 62 50)"/><ellipse cx="103" cy="34" rx="19" ry="21" fill="url(#k21p)"/><ellipse cx="140" cy="52" rx="24" ry="18" fill="url(#k21p)" transform="rotate(12 140 52)"/>
<path d="M95 58 L100 108 L106 108 L103 58Z" fill="#5a5a5a"/></g></svg></div></div>
<div class="ab" style="left:1621.4px;top:440.7px;width:25.6px;height:14.5px;border-radius:7px;background:rgba(10,14,24,.78);color:#f1f5f9;font-size:8.1px;line-height:16.5px;text-align:center">3:20</div>
<div class="ab" style="left:1468.5px;top:469.7px;width:26.5px;height:26.5px;border-radius:14px;background:radial-gradient(ellipse 26% 32% at 50% 48%,#9a9a9a 0,#9a9a9a 80%,transparent 100%),radial-gradient(ellipse 36% 30% at 50% 30%,#4a4a4a 0,#4a4a4a 75%,transparent 100%),radial-gradient(ellipse 55% 35% at 50% 100%,#5a5a5a 0,#5a5a5a 80%,transparent 100%),#e8e8e8"></div>
<div class="ab" style="left:1503.5px;top:468.8px;font-size:9.4px;line-height:13.9px;color:#f8fafc;font-weight:bold">This Camera Made Me<br>Love Photography Again</div>
<div class="ab" style="left:1503.5px;top:499.2px;font-size:8.1px;line-height:11px;color:#a6aebb;white-space:pre">Daily Sprint  •  535K views  •</div>
<div class="ab" style="left:1503.5px;top:516.2px;font-size:8.1px;line-height:11px;color:#a6aebb;white-space:pre">6 days ago</div>
<svg style="left:1633.0px;top:472.2px" width="4" height="12" viewBox="0 0 4 12"><circle cx="2" cy="2" r="0.9" fill="#cbd5e1"/><circle cx="2" cy="6" r="0.9" fill="#cbd5e1"/><circle cx="2" cy="10" r="0.9" fill="#cbd5e1"/></svg>
<div class="ab" style="left:1664.8px;top:353.2px;width:193px;height:182px;border-radius:7px;background:#0f1626;border:1px solid #1a2133;overflow:hidden"><div style="position:absolute;left:-1px;top:-1px;width:193px;height:108px;overflow:hidden;background:#445"><svg style="position:absolute;left:0;top:0" width="193" height="108" viewBox="0 0 193 108"><defs><linearGradient id="k22" x1="0" y1="0" x2="0" y2="1"><stop offset="0" stop-color="#8ecdf0"/><stop offset=".3" stop-color="#cfdcea"/><stop offset=".47" stop-color="#f4c4a8"/><stop offset=".5" stop-color="#8ab8d8"/></linearGradient>
<linearGradient id="k22s" x1="0" y1="0" x2="0" y2="1"><stop offset="0" stop-color="#6ab8d4"/><stop offset="1" stop-color="#2a86b0"/></linearGradient></defs>
<rect width="193" height="108" fill="url(#k22)"/><rect y="54" width="193" height="54" fill="url(#k22s)"/>
<g filter="url(#bl1)"><path d="M0 56 L12 52 L30 58 L45 72 L60 90 L78 108 L0 108Z" fill="#e8eef2"/><path d="M0 75 L25 80 L40 108 L0 108Z" fill="#d0dce6" opacity=".6"/>
<circle cx="5" cy="48" r="3" fill="#b07060"/><circle cx="30" cy="54" r="2.5" fill="#8a5a4a"/><circle cx="22" cy="53" r="2" fill="#9a6050"/><circle cx="12" cy="50" r="2" fill="#6a4a4a"/></g></svg></div></div>
<div class="ab" style="left:1822.3px;top:440.7px;width:30.0px;height:14.5px;border-radius:7px;background:rgba(10,14,24,.78);color:#f1f5f9;font-size:8.1px;line-height:16.5px;text-align:center">11:25</div>
<div class="ab" style="left:1673.8px;top:469.7px;width:26.5px;height:26.5px;border-radius:14px;background:radial-gradient(ellipse 26% 32% at 50% 48%,#e8c8b0 0,#e8c8b0 80%,transparent 100%),radial-gradient(ellipse 36% 30% at 50% 30%,#4a3020 0,#4a3020 75%,transparent 100%),radial-gradient(ellipse 55% 35% at 50% 100%,#5aa0d0 0,#5aa0d0 80%,transparent 100%),#8aa0c0"></div>
<div class="ab" style="left:1708.8px;top:468.8px;font-size:9.4px;line-height:13.9px;color:#f8fafc;font-weight:bold">How to Cook Perfect<br>Ramen at Home</div>
<div class="ab" style="left:1708.8px;top:499.2px;font-size:8.1px;line-height:11px;color:#a6aebb;white-space:pre">TasteCraft  •  828K views  •</div>
<div class="ab" style="left:1708.8px;top:516.2px;font-size:8.1px;line-height:11px;color:#a6aebb;white-space:pre">38 days ago</div>
<svg style="left:1838.3px;top:472.2px" width="4" height="12" viewBox="0 0 4 12"><circle cx="2" cy="2" r="0.9" fill="#cbd5e1"/><circle cx="2" cy="6" r="0.9" fill="#cbd5e1"/><circle cx="2" cy="10" r="0.9" fill="#cbd5e1"/></svg>
<div class="ab" style="left:1870.1px;top:353.2px;width:193px;height:182px;border-radius:7px;background:#0f1626;border:1px solid #1a2133;overflow:hidden"><div style="position:absolute;left:-1px;top:-1px;width:193px;height:108px;overflow:hidden;background:#445"><svg style="position:absolute;left:0;top:0" width="193" height="108" viewBox="0 0 193 108"><defs><linearGradient id="k23" x1="0" y1="0" x2="1" y2="1"><stop offset="0" stop-color="#2a4e90"/><stop offset=".5" stop-color="#22488a"/><stop offset="1" stop-color="#1a3a78"/></linearGradient></defs>
<rect width="193" height="108" fill="url(#k23)"/>
<g fill="none" stroke="#4a74b4" stroke-width="1.2" opacity=".45" filter="url(#bl1)"><path d="M0 15 Q50 10 100 20 T193 15"/><path d="M0 35 Q60 28 110 38 T193 32"/><path d="M0 55 Q50 48 100 58 T193 52"/><path d="M0 75 Q60 70 110 80 T193 74"/><path d="M0 95 Q50 90 100 98 T193 94"/></g>
<g filter="url(#bl1)"><path d="M118 11 L142 12 L132 16Z" fill="#b8c8dc" opacity=".8"/><path d="M50 95 Q60 80 70 72 Q90 60 100 52 Q112 40 118 30 Q125 20 132 10" stroke="#9ab4d4" stroke-width="2" fill="none" opacity=".6"/></g></svg></div></div>
<div class="ab" style="left:2027.6px;top:440.7px;width:30.0px;height:14.5px;border-radius:7px;background:rgba(10,14,24,.78);color:#f1f5f9;font-size:8.1px;line-height:16.5px;text-align:center">11:15</div>
<div class="ab" style="left:1879.1px;top:469.7px;width:26.5px;height:26.5px;border-radius:14px;background:radial-gradient(ellipse 26% 32% at 50% 48%,#8a8a8a 0,#8a8a8a 80%,transparent 100%),radial-gradient(ellipse 36% 30% at 50% 30%,#5a5a5a 0,#5a5a5a 75%,transparent 100%),radial-gradient(ellipse 55% 35% at 50% 100%,#3a3a3a 0,#3a3a3a 80%,transparent 100%),#d0d0d0"></div>
<div class="ab" style="left:1914.1px;top:468.8px;font-size:9.4px;line-height:13.9px;color:#f8fafc;font-weight:bold">The Science of Sleep:<br>What We Get Wrong</div>
<div class="ab" style="left:1914.1px;top:499.2px;font-size:8.1px;line-height:11px;color:#a6aebb;white-space:pre">Nomad Notes  •  436K views  •</div>
<div class="ab" style="left:1914.1px;top:516.2px;font-size:8.1px;line-height:11px;color:#a6aebb;white-space:pre">10 days ago</div>
<svg style="left:2043.6px;top:472.2px" width="4" height="12" viewBox="0 0 4 12"><circle cx="2" cy="2" r="0.9" fill="#cbd5e1"/><circle cx="2" cy="6" r="0.9" fill="#cbd5e1"/><circle cx="2" cy="10" r="0.9" fill="#cbd5e1"/></svg>
<div class="ab" style="left:2075.4px;top:353.2px;width:193px;height:182px;border-radius:7px;background:#0f1626;border:1px solid #1a2133;overflow:hidden"><div style="position:absolute;left:-1px;top:-1px;width:193px;height:108px;overflow:hidden;background:#445"><svg style="position:absolute;left:0;top:0" width="193" height="108" viewBox="0 0 193 108"><defs><linearGradient id="k24" x1="0" y1="0" x2="0" y2="1"><stop offset="0" stop-color="#8cb0d4"/><stop offset=".5" stop-color="#f0ece0"/></linearGradient><radialGradient id="k24s" cx=".2" cy=".35" r=".3"><stop offset="0" stop-color="#fffbe8"/><stop offset="1" stop-color="#fffbe8" stop-opacity="0"/></radialGradient></defs>
<rect width="193" height="108" fill="url(#k24)"/><rect width="193" height="108" fill="url(#k24s)"/>
<g filter="url(#bl1)"><rect x="0" y="38" width="193" height="10" fill="#a8b8c0"/><path d="M100 40 L193 38 L193 70 L120 55Z" fill="#b0c4d0"/>
<path d="M0 45 L100 42 L150 55 L193 70 L193 108 L0 108Z" fill="#8a6c3c"/><path d="M0 80 L193 75 L193 108 L0 108Z" fill="#5a4628"/><path d="M120 55 L193 60 L193 108 L140 108Z" fill="#7a7a46" opacity=".7"/>
<path d="M65 95 L72 38 L82 38 L92 95" stroke="#3a3028" stroke-width="2" fill="none"/><rect x="68" y="65" width="20" height="8" fill="#5a5a5a"/></g></svg></div></div>
<div class="ab" style="left:2232.9px;top:440.7px;width:30.0px;height:14.5px;border-radius:7px;background:rgba(10,14,24,.78);color:#f1f5f9;font-size:8.1px;line-height:16.5px;text-align:center">14:50</div>
<div class="ab" style="left:2084.4px;top:469.7px;width:26.5px;height:26.5px;border-radius:14px;background:radial-gradient(ellipse 26% 32% at 50% 48%,#9a9a9a 0,#9a9a9a 80%,transparent 100%),radial-gradient(ellipse 36% 30% at 50% 30%,#2a2a2a 0,#2a2a2a 75%,transparent 100%),radial-gradient(ellipse 55% 35% at 50% 100%,#4a4a4a 0,#4a4a4a 80%,transparent 100%),#b8b8b8"></div>
<div class="ab" style="left:2119.4px;top:468.8px;font-size:9.4px;line-height:13.9px;color:#f8fafc;font-weight:bold">I Built a Smart Mirror<br>with Voice Control</div>
<div class="ab" style="left:2119.4px;top:499.2px;font-size:8.1px;line-height:11px;color:#a6aebb;white-space:pre">Sketch &amp; Flow  •  300K views  •</div>
<div class="ab" style="left:2119.4px;top:516.2px;font-size:8.1px;line-height:11px;color:#a6aebb;white-space:pre">5 hours ago</div>
<svg style="left:2248.9px;top:472.2px" width="4" height="12" viewBox="0 0 4 12"><circle cx="2" cy="2" r="0.9" fill="#cbd5e1"/><circle cx="2" cy="6" r="0.9" fill="#cbd5e1"/><circle cx="2" cy="10" r="0.9" fill="#cbd5e1"/></svg>
<div class="ab" style="left:2280.7px;top:353.2px;width:193px;height:182px;border-radius:7px;background:#0f1626;border:1px solid #1a2133;overflow:hidden"><div style="position:absolute;left:-1px;top:-1px;width:193px;height:108px;overflow:hidden;background:#445"><svg style="position:absolute;left:0;top:0" width="193" height="108" viewBox="0 0 193 108"><defs><radialGradient id="k25" cx=".45" cy=".85" r=".75"><stop offset="0" stop-color="#e8b050"/><stop offset=".35" stop-color="#c87048"/><stop offset=".6" stop-color="#5a2a40"/><stop offset="1" stop-color="#0c0a10"/></radialGradient></defs>
<rect width="193" height="108" fill="url(#k25)"/>
<g filter="url(#bl4)"><ellipse cx="95" cy="45" rx="22" ry="40" fill="#c060a8" opacity=".75" transform="rotate(20 95 45)"/><ellipse cx="160" cy="60" rx="35" ry="28" fill="#3a9088" opacity=".75"/><ellipse cx="140" cy="90" rx="30" ry="12" fill="#8aa050" opacity=".6"/><ellipse cx="10" cy="10" rx="40" ry="30" fill="#0a0a0e"/><ellipse cx="193" cy="0" rx="40" ry="25" fill="#0a0a0e"/></g>
<path d="M0 108 L0 100 Q60 104 110 100 Q160 85 193 55 L193 108Z" fill="#060608"/><path d="M95 100 L95 82 L98 79 L100 100Z" fill="#060608"/></svg></div></div>
<div class="ab" style="left:2442.6px;top:440.7px;width:25.6px;height:14.5px;border-radius:7px;background:rgba(10,14,24,.78);color:#f1f5f9;font-size:8.1px;line-height:16.5px;text-align:center">7:17</div>
<div class="ab" style="left:2289.7px;top:469.7px;width:26.5px;height:26.5px;border-radius:14px;background:radial-gradient(ellipse 26% 32% at 50% 48%,#c08068 0,#c08068 80%,transparent 100%),radial-gradient(ellipse 36% 30% at 50% 30%,#5a3020 0,#5a3020 75%,transparent 100%),radial-gradient(ellipse 55% 35% at 50% 100%,#8a3a30 0,#8a3a30 80%,transparent 100%),#4a4a58"></div>
<div class="ab" style="left:2324.7px;top:468.8px;font-size:9.4px;line-height:13.9px;color:#f8fafc;font-weight:bold">Beginner’s Guide to 3D<br>Printing</div>
<div class="ab" style="left:2324.7px;top:499.2px;font-size:8.1px;line-height:11px;color:#a6aebb;white-space:pre">Quiet Hours  •  501K views  •</div>
<div class="ab" style="left:2324.7px;top:516.2px;font-size:8.1px;line-height:11px;color:#a6aebb;white-space:pre">9 hours ago</div>
<svg style="left:2454.2px;top:472.2px" width="4" height="12" viewBox="0 0 4 12"><circle cx="2" cy="2" r="0.9" fill="#cbd5e1"/><circle cx="2" cy="6" r="0.9" fill="#cbd5e1"/><circle cx="2" cy="10" r="0.9" fill="#cbd5e1"/></svg>
<div class="ab" style="left:2486.0px;top:353.2px;width:193px;height:182px;border-radius:7px;background:#0f1626;border:1px solid #1a2133;overflow:hidden"><div style="position:absolute;left:-1px;top:-1px;width:193px;height:108px;overflow:hidden;background:#445"><svg style="position:absolute;left:0;top:0" width="193" height="108" viewBox="0 0 193 108"><rect width="193" height="108" fill="#5a5a5a"/>
<g filter="url(#bl1)"><rect x="0" y="0" width="40" height="60" fill="#444"/><rect x="150" y="0" width="43" height="60" fill="#6a6a6a"/><rect x="40" y="0" width="110" height="55" fill="#585858"/>
<rect x="58" y="12" width="9" height="20" rx="4" fill="#e0e0e0"/><rect x="78" y="14" width="9" height="20" rx="4" fill="#e0e0e0"/><rect x="103" y="14" width="9" height="20" rx="4" fill="#e0e0e0"/><rect x="128" y="8" width="9" height="22" rx="4" fill="#e0e0e0"/><rect x="3" y="0" width="12" height="15" fill="#d0d0d0"/><rect x="166" y="0" width="8" height="14" fill="#d0d0d0"/><path d="M100 12 V22 M96 15 H104" stroke="#ddd" stroke-width="1.2"/>
<path d="M95 62 L193 58 L193 108 L100 108Z" fill="#9a9a9a"/><path d="M130 62 L193 60 L193 80 L150 82Z" fill="#4a4442"/>
<path d="M0 60 L80 58 L88 108 L0 108Z" fill="#3e3836"/><path d="M0 70 L78 68 L78 76 L0 78Z" fill="#524a46"/><path d="M60 80 L90 80 L92 95 L60 95Z" fill="#6a6260"/>
<path d="M84 48 Q87 36 94 38 Q99 40 98 50 L97 80 L90 82 L82 70Z" fill="#222"/><circle cx="92" cy="36" r="4" fill="#d0d0d0"/></g></svg></div></div>
<div class="ab" style="left:2643.5px;top:440.7px;width:30.0px;height:14.5px;border-radius:7px;background:rgba(10,14,24,.78);color:#f1f5f9;font-size:8.1px;line-height:16.5px;text-align:center">13:48</div>
<div class="ab" style="left:2495.0px;top:469.7px;width:26.5px;height:26.5px;border-radius:14px;background:radial-gradient(ellipse 26% 32% at 50% 48%,#d8c8b8 0,#d8c8b8 80%,transparent 100%),radial-gradient(ellipse 36% 30% at 50% 30%,#3a3030 0,#3a3030 75%,transparent 100%),radial-gradient(ellipse 55% 35% at 50% 100%,#2a2a2a 0,#2a2a2a 80%,transparent 100%),#1a1a1a"></div>
<div class="ab" style="left:2530.0px;top:468.8px;font-size:9.4px;line-height:13.9px;color:#f8fafc;font-weight:bold">Design Review: Your<br>Portfolios, Fixed</div>
<div class="ab" style="left:2530.0px;top:499.2px;font-size:8.1px;line-height:11px;color:#a6aebb;white-space:pre">Bright Byte  •  843K views  •</div>
<div class="ab" style="left:2530.0px;top:516.2px;font-size:8.1px;line-height:11px;color:#a6aebb;white-space:pre">34 hours ago</div>
<svg style="left:2659.5px;top:472.2px" width="4" height="12" viewBox="0 0 4 12"><circle cx="2" cy="2" r="0.9" fill="#cbd5e1"/><circle cx="2" cy="6" r="0.9" fill="#cbd5e1"/><circle cx="2" cy="10" r="0.9" fill="#cbd5e1"/></svg>
<div class="ab" style="left:1459.5px;top:548.5px;width:193px;height:182px;border-radius:7px;background:#0f1626;border:1px solid #1a2133;overflow:hidden"><div style="position:absolute;left:-1px;top:-1px;width:193px;height:108px;overflow:hidden;background:#445"><svg style="position:absolute;left:0;top:0" width="193" height="108" viewBox="0 0 193 108"><defs><linearGradient id="k31" x1="0" y1="0" x2="0" y2="1"><stop offset="0" stop-color="#34466a"/><stop offset=".5" stop-color="#5c7090"/><stop offset=".7" stop-color="#8a9cb0"/></linearGradient></defs>
<rect width="193" height="108" fill="url(#k31)"/>
<g filter="url(#bl1)"><path d="M0 76 L193 74 L193 108 L0 108Z" fill="#857664"/><path d="M0 80 L40 78 L55 108 L0 108Z" fill="#6e604e"/>
<path d="M42 78 L47 77 Q52 92 90 108 L70 108 Q48 96 42 78Z" fill="#e0dcd2"/></g></svg></div></div>
<div class="ab" style="left:1621.4px;top:636.0px;width:25.6px;height:14.5px;border-radius:7px;background:rgba(10,14,24,.78);color:#f1f5f9;font-size:8.1px;line-height:16.5px;text-align:center">4:50</div>
<div class="ab" style="left:1468.5px;top:665.0px;width:26.5px;height:26.5px;border-radius:14px;background:radial-gradient(ellipse 26% 32% at 50% 48%,#b89070 0,#b89070 80%,transparent 100%),radial-gradient(ellipse 36% 30% at 50% 30%,#3a2a20 0,#3a2a20 75%,transparent 100%),radial-gradient(ellipse 55% 35% at 50% 100%,#4a4a4a 0,#4a4a4a 80%,transparent 100%),#a0b0c0"></div>
<div class="ab" style="left:1503.5px;top:664.1px;font-size:9.4px;line-height:13.9px;color:#f8fafc;font-weight:bold">Why We Procrastinate<br>(and How to Stop)</div>
<div class="ab" style="left:1503.5px;top:694.5px;font-size:8.1px;line-height:11px;color:#a6aebb;white-space:pre">Clarity Labs  •  333K views  •</div>
<div class="ab" style="left:1503.5px;top:711.5px;font-size:8.1px;line-height:11px;color:#a6aebb;white-space:pre">19 days ago</div>
<svg style="left:1633.0px;top:667.5px" width="4" height="12" viewBox="0 0 4 12"><circle cx="2" cy="2" r="0.9" fill="#cbd5e1"/><circle cx="2" cy="6" r="0.9" fill="#cbd5e1"/><circle cx="2" cy="10" r="0.9" fill="#cbd5e1"/></svg>
<div class="ab" style="left:1664.8px;top:548.5px;width:193px;height:182px;border-radius:7px;background:#0f1626;border:1px solid #1a2133;overflow:hidden"><div style="position:absolute;left:-1px;top:-1px;width:193px;height:108px;overflow:hidden;background:#445"><svg style="position:absolute;left:0;top:0" width="193" height="108" viewBox="0 0 193 108"><defs><linearGradient id="k32" x1="0" y1="0" x2="0" y2="1"><stop offset="0" stop-color="#f4f6fa"/><stop offset=".58" stop-color="#e2eaf2"/><stop offset=".6" stop-color="#b8cce0"/><stop offset=".9" stop-color="#c4d6e6"/><stop offset=".92" stop-color="#f0f2f4"/></linearGradient></defs>
<rect width="193" height="108" fill="url(#k32)"/>
<g filter="url(#bl1)"><path d="M60 75 L80 70 Q100 66 110 70 L125 72 L110 80 L90 82Z" fill="#a8b4c4"/><ellipse cx="100" cy="74" rx="14" ry="5" fill="#f0f2f4"/><circle cx="113" cy="71" r="3.5" fill="#f4f4f4"/><path d="M93 80 L94 94 M98 80 L99 94" stroke="#d84040" stroke-width="1.4"/><path d="M116 72 L122 73" stroke="#d84040" stroke-width="1.2"/></g></svg></div></div>
<div class="ab" style="left:1826.7px;top:636.0px;width:25.6px;height:14.5px;border-radius:7px;background:rgba(10,14,24,.78);color:#f1f5f9;font-size:8.1px;line-height:16.5px;text-align:center">9:54</div>
<div class="ab" style="left:1673.8px;top:665.0px;width:26.5px;height:26.5px;border-radius:14px;background:radial-gradient(ellipse 26% 32% at 50% 48%,#e0a880 0,#e0a880 80%,transparent 100%),radial-gradient(ellipse 36% 30% at 50% 30%,#8a5030 0,#8a5030 75%,transparent 100%),radial-gradient(ellipse 55% 35% at 50% 100%,#c07048 0,#c07048 80%,transparent 100%),#d08860"></div>
<div class="ab" style="left:1708.8px;top:664.1px;font-size:9.4px;line-height:13.9px;color:#f8fafc;font-weight:bold">7 Budget Travel Hacks<br>No One Tells You</div>
<div class="ab" style="left:1708.8px;top:694.5px;font-size:8.1px;line-height:11px;color:#a6aebb;white-space:pre">Pixel Pantry  •  801K views  •</div>
<div class="ab" style="left:1708.8px;top:711.5px;font-size:8.1px;line-height:11px;color:#a6aebb;white-space:pre">31 days ago</div>
<svg style="left:1838.3px;top:667.5px" width="4" height="12" viewBox="0 0 4 12"><circle cx="2" cy="2" r="0.9" fill="#cbd5e1"/><circle cx="2" cy="6" r="0.9" fill="#cbd5e1"/><circle cx="2" cy="10" r="0.9" fill="#cbd5e1"/></svg>
<div class="ab" style="left:1870.1px;top:548.5px;width:193px;height:182px;border-radius:7px;background:#0f1626;border:1px solid #1a2133;overflow:hidden"><div style="position:absolute;left:-1px;top:-1px;width:193px;height:108px;overflow:hidden;background:#445"><svg style="position:absolute;left:0;top:0" width="193" height="108" viewBox="0 0 193 108"><defs><linearGradient id="k33" x1="0" y1="0" x2="0" y2="1"><stop offset="0" stop-color="#b03a40"/><stop offset=".3" stop-color="#e8702a"/><stop offset=".47" stop-color="#ffc040"/><stop offset=".53" stop-color="#6a2a30"/><stop offset="1" stop-color="#2a1a30"/></linearGradient></defs>
<rect width="193" height="108" fill="url(#k33)"/>
<g filter="url(#bl1)"><ellipse cx="110" cy="50" rx="20" ry="6" fill="#fff0a0"/><path d="M108 55 L112 55 L116 108 L104 108Z" fill="#e08030" opacity=".5"/>
<path d="M40 58 Q60 50 80 56 L90 58Z M150 58 Q170 50 185 58Z" fill="#1a1018"/><path d="M0 60 Q40 60 55 80 L70 108 L0 108Z" fill="#160e14"/></g></svg></div></div>
<div class="ab" style="left:2027.6px;top:636.0px;width:30.0px;height:14.5px;border-radius:7px;background:rgba(10,14,24,.78);color:#f1f5f9;font-size:8.1px;line-height:16.5px;text-align:center">10:25</div>
<div class="ab" style="left:1879.1px;top:665.0px;width:26.5px;height:26.5px;border-radius:14px;background:radial-gradient(ellipse 26% 32% at 50% 48%,#e0c8b0 0,#e0c8b0 80%,transparent 100%),radial-gradient(ellipse 36% 30% at 50% 30%,#5a4030 0,#5a4030 75%,transparent 100%),radial-gradient(ellipse 55% 35% at 50% 100%,#3a3a3a 0,#3a3a3a 80%,transparent 100%),#f0ece8"></div>
<div class="ab" style="left:1914.1px;top:664.1px;font-size:9.4px;line-height:13.9px;color:#f8fafc;font-weight:bold">Gaming on a Handheld<br>PC for a Week</div>
<div class="ab" style="left:1914.1px;top:694.5px;font-size:8.1px;line-height:11px;color:#a6aebb;white-space:pre">Code &amp; Coffee  •  335K views</div>
<div class="ab" style="left:1914.1px;top:711.5px;font-size:8.1px;line-height:11px;color:#a6aebb;white-space:pre">•  26 days ago</div>
<svg style="left:2043.6px;top:667.5px" width="4" height="12" viewBox="0 0 4 12"><circle cx="2" cy="2" r="0.9" fill="#cbd5e1"/><circle cx="2" cy="6" r="0.9" fill="#cbd5e1"/><circle cx="2" cy="10" r="0.9" fill="#cbd5e1"/></svg>
<div class="ab" style="left:2075.4px;top:548.5px;width:193px;height:182px;border-radius:7px;background:#0f1626;border:1px solid #1a2133;overflow:hidden"><div style="position:absolute;left:-1px;top:-1px;width:193px;height:108px;overflow:hidden;background:#445"><svg style="position:absolute;left:0;top:0" width="193" height="108" viewBox="0 0 193 108"><rect width="193" height="108" fill="#4e6638"/>
<g filter="url(#bl2)"><rect x="0" y="0" width="193" height="26" fill="#3e5030"/><path d="M0 28 L60 30 L90 50 L85 108 L0 108Z" fill="#9a9c98"/><path d="M0 40 L40 45 L50 108 L0 108Z" fill="#b4b4b0" opacity=".7"/>
<path d="M90 20 L193 10 L193 108 L80 108 L95 60Z" fill="#4e6a36"/><path d="M120 40 L193 30 L193 90 L130 80Z" fill="#6a8a48" opacity=".6"/></g>
<g filter="url(#bl1)"><path d="M44 48 Q55 38 72 42 L76 60 L72 92 L68 92 L66 70 L52 70 L48 92 L42 92 L44 70Z" fill="#6a5444"/><path d="M72 40 L88 22 M68 38 L55 15" stroke="#4a3a2e" stroke-width="2"/></g></svg></div></div>
<div class="ab" style="left:2237.3px;top:636.0px;width:25.6px;height:14.5px;border-radius:7px;background:rgba(10,14,24,.78);color:#f1f5f9;font-size:8.1px;line-height:16.5px;text-align:center">6:01</div>
<div class="ab" style="left:2084.4px;top:665.0px;width:26.5px;height:26.5px;border-radius:14px;background:radial-gradient(ellipse 26% 32% at 50% 48%,#a06848 0,#a06848 80%,transparent 100%),radial-gradient(ellipse 36% 30% at 50% 30%,#2a1810 0,#2a1810 75%,transparent 100%),radial-gradient(ellipse 55% 35% at 50% 100%,#8a5040 0,#8a5040 80%,transparent 100%),#d0c0b8"></div>
<div class="ab" style="left:2119.4px;top:664.1px;font-size:9.4px;line-height:13.9px;color:#f8fafc;font-weight:bold">Film Lighting Tricks on a<br>Budget</div>
<div class="ab" style="left:2119.4px;top:694.5px;font-size:8.1px;line-height:11px;color:#a6aebb;white-space:pre">Midnight Mechanics  •</div>
<div class="ab" style="left:2119.4px;top:711.5px;font-size:8.1px;line-height:11px;color:#a6aebb;white-space:pre">634K views  •  14 hours ago</div>
<svg style="left:2248.9px;top:667.5px" width="4" height="12" viewBox="0 0 4 12"><circle cx="2" cy="2" r="0.9" fill="#cbd5e1"/><circle cx="2" cy="6" r="0.9" fill="#cbd5e1"/><circle cx="2" cy="10" r="0.9" fill="#cbd5e1"/></svg>
<div class="ab" style="left:2280.7px;top:548.5px;width:193px;height:182px;border-radius:7px;background:#0f1626;border:1px solid #1a2133;overflow:hidden"><div style="position:absolute;left:-1px;top:-1px;width:193px;height:108px;overflow:hidden;background:#445"><svg style="position:absolute;left:0;top:0" width="193" height="108" viewBox="0 0 193 108"><rect width="193" height="108" fill="#e6e6e4"/>
<g filter="url(#bl1)"><rect x="80" y="0" width="113" height="60" fill="#f0f2f2"/><rect x="82" y="0" width="72" height="38" fill="#4e3e50"/><rect x="155" y="0" width="38" height="45" fill="#f4f6f6"/>
<path d="M80 60 L193 45 L193 108 L90 108Z" fill="#dcdedc"/><path d="M0 82 L60 78 L120 108 L0 108Z" fill="#3a2e28"/>
<path d="M5 60 L60 55 L95 95 L40 100Z" fill="#c8a070"/>
<ellipse cx="58" cy="54" rx="24" ry="32" fill="#f2f0ea"/><ellipse cx="66" cy="52" rx="15" ry="21" fill="#2e3238"/><ellipse cx="66" cy="52" rx="9" ry="13" fill="#b8bcc0"/><circle cx="66" cy="52" r="3" fill="#6a6e72"/>
<path d="M105 78 L150 55" stroke="#8a6040" stroke-width="3"/><ellipse cx="110" cy="68" rx="6" ry="10" fill="#3a2e30"/><rect x="138" y="88" width="22" height="20" rx="3" fill="#f0f0f0"/><circle cx="180" cy="40" r="7" fill="#5a9a4a" opacity=".8"/></g></svg></div></div>
<div class="ab" style="left:2442.6px;top:636.0px;width:25.6px;height:14.5px;border-radius:7px;background:rgba(10,14,24,.78);color:#f1f5f9;font-size:8.1px;line-height:16.5px;text-align:center">3:14</div>
<div class="ab" style="left:2289.7px;top:665.0px;width:26.5px;height:26.5px;border-radius:14px;background:radial-gradient(ellipse 26% 32% at 50% 48%,#e0d0c0 0,#e0d0c0 80%,transparent 100%),radial-gradient(ellipse 36% 30% at 50% 30%,#d0d0d0 0,#d0d0d0 75%,transparent 100%),radial-gradient(ellipse 55% 35% at 50% 100%,#3a3a3a 0,#3a3a3a 80%,transparent 100%),#5a6060"></div>
<div class="ab" style="left:2324.7px;top:664.1px;font-size:9.4px;line-height:13.9px;color:#f8fafc;font-weight:bold">The Art of Concentration:<br>Deep Work Tips</div>
<div class="ab" style="left:2324.7px;top:694.5px;font-size:8.1px;line-height:11px;color:#a6aebb;white-space:pre">Studio Saturday  •  322K views</div>
<div class="ab" style="left:2324.7px;top:711.5px;font-size:8.1px;line-height:11px;color:#a6aebb;white-space:pre">•  35 hours ago</div>
<svg style="left:2454.2px;top:667.5px" width="4" height="12" viewBox="0 0 4 12"><circle cx="2" cy="2" r="0.9" fill="#cbd5e1"/><circle cx="2" cy="6" r="0.9" fill="#cbd5e1"/><circle cx="2" cy="10" r="0.9" fill="#cbd5e1"/></svg>
<div class="ab" style="left:2486.0px;top:548.5px;width:193px;height:182px;border-radius:7px;background:#0f1626;border:1px solid #1a2133;overflow:hidden"><div style="position:absolute;left:-1px;top:-1px;width:193px;height:108px;overflow:hidden;background:#445"><svg style="position:absolute;left:0;top:0" width="193" height="108" viewBox="0 0 193 108"><defs><linearGradient id="k36" x1="0" y1="0" x2="0" y2="1"><stop offset="0" stop-color="#4c70b0"/><stop offset=".5" stop-color="#c8d2e2"/><stop offset=".85" stop-color="#e6eaf0"/><stop offset="1" stop-color="#d4dce8"/></linearGradient></defs>
<rect width="193" height="108" fill="url(#k36)"/>
<g filter="url(#bl2)" fill="#eef0f4"><ellipse cx="60" cy="10" rx="40" ry="12"/><ellipse cx="120" cy="30" rx="70" ry="22"/><ellipse cx="170" cy="55" rx="30" ry="14"/><ellipse cx="40" cy="55" rx="40" ry="14"/><ellipse cx="100" cy="85" rx="80" ry="12"/><ellipse cx="175" cy="15" rx="20" ry="8" opacity=".7"/></g>
<g filter="url(#bl2)" fill="#3a64a8" opacity=".75"><ellipse cx="15" cy="25" rx="14" ry="6"/><ellipse cx="85" cy="50" rx="14" ry="5"/><ellipse cx="160" cy="10" rx="20" ry="6"/><ellipse cx="120" cy="92" rx="30" ry="3"/><ellipse cx="30" cy="72" rx="16" ry="3"/></g></svg></div></div>
<div class="ab" style="left:2643.5px;top:636.0px;width:30.0px;height:14.5px;border-radius:7px;background:rgba(10,14,24,.78);color:#f1f5f9;font-size:8.1px;line-height:16.5px;text-align:center">15:36</div>
<div class="ab" style="left:2495.0px;top:665.0px;width:26.5px;height:26.5px;border-radius:14px;background:radial-gradient(ellipse 26% 32% at 50% 48%,#e0b8a0 0,#e0b8a0 80%,transparent 100%),radial-gradient(ellipse 36% 30% at 50% 30%,#c8a088 0,#c8a088 75%,transparent 100%),radial-gradient(ellipse 55% 35% at 50% 100%,#5a5a5a 0,#5a5a5a 80%,transparent 100%),#f0f0f0"></div>
<div class="ab" style="left:2530.0px;top:664.1px;font-size:9.4px;line-height:13.9px;color:#f8fafc;font-weight:bold">Running a One-Person<br>SaaS</div>
<div class="ab" style="left:2530.0px;top:694.5px;font-size:8.1px;line-height:11px;color:#a6aebb;white-space:pre">Curious Cosmos  •  198K views</div>
<div class="ab" style="left:2530.0px;top:711.5px;font-size:8.1px;line-height:11px;color:#a6aebb;white-space:pre">•  7 hours ago</div>
<svg style="left:2659.5px;top:667.5px" width="4" height="12" viewBox="0 0 4 12"><circle cx="2" cy="2" r="0.9" fill="#cbd5e1"/><circle cx="2" cy="6" r="0.9" fill="#cbd5e1"/><circle cx="2" cy="10" r="0.9" fill="#cbd5e1"/></svg>
<div class="ab" style="left:1459.5px;top:743.4px;width:193px;height:182px;border-radius:7px;background:#0f1626;border:1px solid #1a2133;overflow:hidden"><div style="position:absolute;left:-1px;top:-1px;width:193px;height:108px;overflow:hidden;background:#445"><svg style="position:absolute;left:0;top:0" width="193" height="108" viewBox="0 0 193 108"><defs><linearGradient id="k41" x1="0" y1="0" x2="0" y2="1"><stop offset="0" stop-color="#6e7878"/><stop offset=".5" stop-color="#b8bebc"/></linearGradient></defs>
<rect width="193" height="108" fill="url(#k41)"/><g filter="url(#bl2)"><path d="M0 62 Q50 52 100 48 Q150 38 193 35 L193 108 L0 108Z" fill="#26332c"/><ellipse cx="60" cy="50" rx="40" ry="10" fill="#c0c6c4" opacity=".6"/></g></svg></div></div>
<div class="ab" style="left:1664.8px;top:743.4px;width:193px;height:182px;border-radius:7px;background:#0f1626;border:1px solid #1a2133;overflow:hidden"><div style="position:absolute;left:-1px;top:-1px;width:193px;height:108px;overflow:hidden;background:#445"><svg style="position:absolute;left:0;top:0" width="193" height="108" viewBox="0 0 193 108"><rect width="193" height="108" fill="#4e463c"/>
<g filter="url(#bl2)"><path d="M40 0 L193 0 L193 18 L40 22Z" fill="#e4d0c8"/><path d="M0 0 L45 0 L50 60 L0 70Z" fill="#2e2a26"/><ellipse cx="110" cy="50" rx="40" ry="32" fill="#c4bcb2"/><ellipse cx="75" cy="35" rx="15" ry="18" fill="#a8a098"/><path d="M150 20 L193 15 L193 108 L140 108Z" fill="#3e362e"/><path d="M0 75 L60 68 L75 108 L0 108Z" fill="#a49c92"/></g></svg></div></div>
<div class="ab" style="left:1870.1px;top:743.4px;width:193px;height:182px;border-radius:7px;background:#0f1626;border:1px solid #1a2133;overflow:hidden"><div style="position:absolute;left:-1px;top:-1px;width:193px;height:108px;overflow:hidden;background:#445"><svg style="position:absolute;left:0;top:0" width="193" height="108" viewBox="0 0 193 108"><defs><linearGradient id="k43" x1="0" y1="0" x2="0" y2="1"><stop offset="0" stop-color="#6a88a8"/><stop offset=".35" stop-color="#a4aab0"/><stop offset=".5" stop-color="#d8a878"/><stop offset=".58" stop-color="#3a3434"/></linearGradient></defs><rect width="193" height="108" fill="url(#k43)"/><ellipse cx="145" cy="53" rx="10" ry="4" fill="#fff0c0" filter="url(#bl2)"/></svg></div></div>
<div class="ab" style="left:2075.4px;top:743.4px;width:193px;height:182px;border-radius:7px;background:#0f1626;border:1px solid #1a2133;overflow:hidden"><div style="position:absolute;left:-1px;top:-1px;width:193px;height:108px;overflow:hidden;background:#445"><svg style="position:absolute;left:0;top:0" width="193" height="108" viewBox="0 0 193 108"><rect width="193" height="108" fill="#3c4a34"/>
<g filter="url(#bl1)"><rect x="0" y="0" width="193" height="40" fill="#8a9a88" opacity=".55"/><path d="M22 0 L28 108 M48 0 L46 108 M75 0 L80 108 M100 0 L96 108 M175 0 L180 108" stroke="#1e241c" stroke-width="6"/><path d="M120 0 L160 0 L148 50 L135 108 L105 108 L122 48Z" fill="#8a7a5a"/></g></svg></div></div>
<div class="ab" style="left:2280.7px;top:743.4px;width:193px;height:182px;border-radius:7px;background:#0f1626;border:1px solid #1a2133;overflow:hidden"><div style="position:absolute;left:-1px;top:-1px;width:193px;height:108px;overflow:hidden;background:#445"><svg style="position:absolute;left:0;top:0" width="193" height="108" viewBox="0 0 193 108"><rect width="193" height="108" fill="#e6eef0"/><g filter="url(#bl1)"><path d="M95 0 L193 0 L193 108 L75 108 L88 45Z" fill="#3a3460"/><path d="M100 0 L135 0 L118 40 L98 65 L90 50Z" fill="#f4f4f4"/><path d="M112 0 L145 0 L128 28Z" fill="#8a5840"/></g></svg></div></div>
<div class="ab" style="left:2486.0px;top:743.4px;width:193px;height:182px;border-radius:7px;background:#0f1626;border:1px solid #1a2133;overflow:hidden"><div style="position:absolute;left:-1px;top:-1px;width:193px;height:108px;overflow:hidden;background:#445"><svg style="position:absolute;left:0;top:0" width="193" height="108" viewBox="0 0 193 108"><defs><linearGradient id="k46" x1="0" y1="0" x2="0" y2="1"><stop offset="0" stop-color="#8c98aa"/><stop offset=".7" stop-color="#bca8a0"/><stop offset="1" stop-color="#c89880"/></linearGradient></defs><rect width="193" height="108" fill="url(#k46)"/></svg></div></div>
</div></div>
<div class="p" style="left:2726px;top:68px;width:1301px;height:731px;border-radius:7px;background:#0f0f0f">
<div style="position:absolute;left:-2726px;top:-68px;width:4096px;height:868px">
<div class="ab" style="left:4018.5px;top:68px;width:9px;height:731px;background:#2c2c2c"></div>
<div class="ab" style="left:4019px;top:79px;width:8px;height:655px;background:#a3a3a3;border-radius:4px"></div>
<svg style="left:4019px;top:70px" width="8" height="7"><path d="M4 1 L7.5 6 L0.5 6Z" fill="#a3a3a3"/></svg>
<svg style="left:4019px;top:791px" width="8" height="7"><path d="M0.5 1 L7.5 1 L4 6Z" fill="#a3a3a3"/></svg>
<div class="ab" style="left:2744px;top:82.8px;width:13px;height:1.5px;background:#fff"></div>
<div class="ab" style="left:2744px;top:86.0px;width:13px;height:1.5px;background:#fff"></div>
<div class="ab" style="left:2744px;top:89.3px;width:13px;height:1.5px;background:#fff"></div>
<svg style="left:2776px;top:80px" width="19" height="14" viewBox="0 0 19 14"><rect x="0" y="0" width="19" height="14" rx="3" fill="#f00"/><path d="M7.4 3.8 L12.8 7 L7.4 10.2Z" fill="#fff"/></svg>
<div class="ab" style="left:2797px;top:79.13px;font-size:13.8px;line-height:17.94px;color:#fff;font-weight:bold;letter-spacing:-0.65px">YouTube</div>
<div class="ab" style="left:3123.6px;top:73.3px;width:460.5px;height:27px;border:1px solid #303030;border-radius:14px;background:#121212"></div>
<div class="ab" style="left:3540px;top:73.3px;width:44px;height:27px;border:1px solid #303030;border-radius:0 14px 14px 0;background:#222"></div>
<div class="ab" style="left:3134.5px;top:80.56px;font-size:9.6px;line-height:12.48px;color:#888;">Search</div>
<svg style="left:3554px;top:79px" width="16" height="16" viewBox="0 0 16 16"><circle cx="7" cy="6.8" r="4.4" fill="none" stroke="#f1f1f1" stroke-width="1.1"/><path d="M10.2 10 L13 12.8" stroke="#f1f1f1" stroke-width="1.2"/></svg>
<div class="ab" style="left:3592.5px;top:73.5px;width:27px;height:27px;border-radius:14px;background:#181818"></div>
<svg style="left:3599px;top:80px" width="14" height="14" viewBox="0 0 14 14"><rect x="5" y="1" width="4" height="7.2" rx="2" fill="#fff"/><path d="M3 6.6 Q3 10.6 7 10.6 Q11 10.6 11 6.6" fill="none" stroke="#fff" stroke-width="1.2"/><path d="M7 10.6 V13" stroke="#fff" stroke-width="1.2"/></svg>
<svg style="left:3889px;top:81px" width="14" height="12" viewBox="0 0 14 12"><rect x="0.5" y="2.5" width="9" height="8" rx="0.8" fill="#fff"/><path d="M9.5 5.3 L13.3 3 V10 L9.5 7.7Z" fill="#fff"/></svg>
<svg style="left:3921px;top:80px" width="14" height="14" viewBox="0 0 14 14"><circle cx="7" cy="7" r="5.6" fill="none" stroke="#fff" stroke-width="1.6"/><path d="M7 3.8 V7.3 L9.2 8.6" fill="none" stroke="#fff" stroke-width="1.3"/></svg>
<svg style="left:3954px;top:80px" width="14" height="14" viewBox="0 0 14 14"><path d="M2 11 H12 L10.8 9.4 V6.4 Q10.8 2.6 7 2.4 Q3.2 2.6 3.2 6.4 V9.4Z" fill="#fff"/><path d="M7 1 V2.5" stroke="#fff" stroke-width="1.2"/><path d="M5.6 12 Q7 13.6 8.4 12" fill="#fff" stroke="#fff" stroke-width="0.8"/></svg>
<div class="ab" style="left:3985px;top:76px;width:22px;height:22px;border-radius:11px;background:linear-gradient(135deg,#667eea,#764ba2)"></div>
<div class="ab" style="left:2726px;top:119px;width:163px;height:27.7px;background:#272727"></div>
<svg style="left:2735px;top:126.00px" width="14" height="14" viewBox="0 0 14 14"><path d="M1.5 6.8 L7 1.8 L12.5 6.8 V12.6 H1.5Z" fill="#fff"/><rect x="5.6" y="9" width="2.8" height="3.6" fill="#272727"/></svg>
<div class="ab" style="left:2767px;top:126.89px;font-size:9.4px;line-height:12.22px;color:#f1f1f1;">Home</div>
<svg style="left:2735px;top:153.00px" width="14" height="14" viewBox="0 0 14 14"><circle cx="7" cy="7" r="6" fill="none" stroke="#fff" stroke-width="1.3" stroke-linejoin="round" stroke-linecap="round"/><path d="M8.8 3.6 Q6 4 5.6 6.4 Q7.6 7.4 7.4 10.4" fill="none" stroke="#fff" stroke-width="1.3" stroke-linejoin="round" stroke-linecap="round"/></svg>
<div class="ab" style="left:2767px;top:153.89px;font-size:9.4px;line-height:12.22px;color:#f1f1f1;">Shorts</div>
<svg style="left:2735px;top:180.40px" width="14" height="14" viewBox="0 0 14 14"><path d="M8.2 1.6 Q11.4 1.6 11.2 4.4 L7.6 6.6 Q11.4 7.8 10.4 10.8 L6 12.6 Q2.6 12.6 2.8 9.6 L6.4 7.4 Q2.6 6.2 3.6 3.2Z" fill="none" stroke="#fff" stroke-width="1.3" stroke-linejoin="round" stroke-linecap="round"/><path d="M6 5.4 L8.6 7 L6 8.6Z" fill="#fff"/></svg>
<div class="ab" style="left:2767px;top:181.29px;font-size:9.4px;line-height:12.22px;color:#f1f1f1;">Subscriptions</div>
<svg style="left:2735px;top:219.00px" width="14" height="14" viewBox="0 0 14 14"><circle cx="7" cy="7" r="5.8" fill="none" stroke="#fff" stroke-width="1.3" stroke-linejoin="round" stroke-linecap="round"/><path d="M7 3.8 V7.3 L9.2 8.6" fill="none" stroke="#fff" stroke-width="1.3" stroke-linejoin="round" stroke-linecap="round"/></svg>
<div class="ab" style="left:2767px;top:219.89px;font-size:9.4px;line-height:12.22px;color:#f1f1f1;">History</div>
<svg style="left:2735px;top:246.00px" width="14" height="14" viewBox="0 0 14 14"><rect x="1" y="2.8" width="12" height="8.4" rx="1.5" fill="#fff"/><path d="M5.6 5 L9 7 L5.6 9Z" fill="#0f0f0f"/></svg>
<div class="ab" style="left:2767px;top:246.89px;font-size:9.4px;line-height:12.22px;color:#f1f1f1;">Your videos</div>
<svg style="left:2735px;top:273.00px" width="14" height="14" viewBox="0 0 14 14"><path d="M2.4 4.4 A6 6 0 1 1 1.2 7.6" fill="none" stroke="#fff" stroke-width="1.3" stroke-linejoin="round" stroke-linecap="round"/><path d="M1 2.5 V5 H3.5" fill="none" stroke="#fff" stroke-width="1.3" stroke-linejoin="round" stroke-linecap="round"/><path d="M7 4 V7.2 L9.2 8.6" fill="none" stroke="#fff" stroke-width="1.3" stroke-linejoin="round" stroke-linecap="round"/></svg>
<div class="ab" style="left:2767px;top:273.89px;font-size:9.4px;line-height:12.22px;color:#f1f1f1;">Watch Later</div>
<svg style="left:2735px;top:300.40px" width="14" height="14" viewBox="0 0 14 14"><path d="M1.5 6.5 H4 V12.8 H1.5Z M4 6.5 L7 1.5 Q8.5 1.5 8.3 3.5 L8 5.6 H11.8 Q13 5.8 12.7 7 L11.6 11.8 Q11.3 12.8 10.2 12.8 H4" fill="none" stroke="#fff" stroke-width="1" stroke-linejoin="round"/></svg>
<div class="ab" style="left:2767px;top:301.29px;font-size:9.4px;line-height:12.22px;color:#f1f1f1;">Liked videos</div>
<svg style="left:2735px;top:502.30px" width="14" height="14" viewBox="0 0 14 14"><path d="M7.5 1 Q12.5 3.5 12.5 8.5 Q12.5 13 7 13 Q1.5 13 1.5 8.5 Q1.5 5 5 3.5 Q5 6 6.5 6.5 Q6 3 7.5 1Z" fill="#fff"/><path d="M7 7.5 Q9.4 8.6 9 10.6 Q8.4 12 7 12 Q5.4 12 5.2 10.4 Q5.4 8.8 7 7.5Z" fill="#0f0f0f"/></svg>
<div class="ab" style="left:2767px;top:503.19px;font-size:9.4px;line-height:12.22px;color:#f1f1f1;">Trending</div>
<svg style="left:2735px;top:529.20px" width="14" height="14" viewBox="0 0 14 14"><circle cx="4.5" cy="10.5" r="2" fill="none" stroke="#fff" stroke-width="1.3" stroke-linejoin="round" stroke-linecap="round"/><path d="M6.5 10.5 V2 H10.5 V4.4 H6.5" fill="none" stroke="#fff" stroke-width="1.3" stroke-linejoin="round" stroke-linecap="round"/></svg>
<div class="ab" style="left:2767px;top:530.09px;font-size:9.4px;line-height:12.22px;color:#f1f1f1;">Music</div>
<svg style="left:2735px;top:556.50px" width="14" height="14" viewBox="0 0 14 14"><path d="M7 1.5 L12.8 4.5 V9.5 L7 12.5 L1.2 9.5 V4.5Z" fill="#fff"/><path d="M3.6 7 H6 M4.8 5.8 V8.2" stroke="#0f0f0f" stroke-width="1.1"/><circle cx="9.2" cy="6.2" r="0.8" fill="#0f0f0f"/><circle cx="9.2" cy="8.2" r="0.8" fill="#0f0f0f"/></svg>
<div class="ab" style="left:2767px;top:557.39px;font-size:9.4px;line-height:12.22px;color:#f1f1f1;">Gaming</div>
<svg style="left:2735px;top:583.50px" width="14" height="14" viewBox="0 0 14 14"><path d="M3.6 1.5 H10.4 V5.5 Q10.4 9 7 9 Q3.6 9 3.6 5.5Z M3.6 2.8 H1.3 Q1.2 5.6 3.7 6 M10.4 2.8 H12.7 Q12.8 5.6 10.3 6 M7 9 V11.3 M4.3 12.7 H9.7 L9 11.3 H5Z" fill="none" stroke="#fff" stroke-width="1" stroke-linejoin="round"/></svg>
<div class="ab" style="left:2767px;top:584.39px;font-size:9.4px;line-height:12.22px;color:#f1f1f1;">Sports</div>
<div class="ab" style="left:2735px;top:360.2px;width:16px;height:16px;border-radius:8px;background:linear-gradient(135deg,#667eea,#764ba2)"></div>
<div class="ab" style="left:2767px;top:362.09px;font-size:9.4px;line-height:12.22px;color:#f1f1f1;">Tech Channel</div>
<div class="ab" style="left:2735px;top:387.4px;width:16px;height:16px;border-radius:8px;background:linear-gradient(135deg,#f093fb,#f5576c)"></div>
<div class="ab" style="left:2767px;top:389.29px;font-size:9.4px;line-height:12.22px;color:#f1f1f1;">Gaming Pro</div>
<div class="ab" style="left:2735px;top:414.6px;width:16px;height:16px;border-radius:8px;background:linear-gradient(135deg,#4facfe,#00f2fe)"></div>
<div class="ab" style="left:2767px;top:416.49px;font-size:9.4px;line-height:12.22px;color:#f1f1f1;">Music Vibes</div>
<div class="ab" style="left:2735px;top:441.8px;width:16px;height:16px;border-radius:8px;background:linear-gradient(135deg,#43e97b,#38f9d7)"></div>
<div class="ab" style="left:2767px;top:443.69px;font-size:9.4px;line-height:12.22px;color:#f1f1f1;">Food Network</div>
<div class="ab" style="left:2726px;top:206.4px;width:163px;height:1px;background:#2e2e2e"></div>
<div class="ab" style="left:2726px;top:326.4px;width:163px;height:1px;background:#2e2e2e"></div>
<div class="ab" style="left:2726px;top:468.2px;width:163px;height:1px;background:#2e2e2e"></div>
<div class="ab" style="left:2726px;top:609.6px;width:163px;height:1px;background:#2e2e2e"></div>
<div class="ab" style="left:2735px;top:337.95px;font-size:9px;line-height:11.7px;color:#aaa;font-weight:bold;">Subscriptions</div>
<div class="ab" style="left:2735px;top:479.15px;font-size:9px;line-height:11.7px;color:#aaa;font-weight:bold;">Explore</div>
<div class="ab" style="left:2905px;top:130px;width:27.0px;height:22px;border-radius:6px;background:#f1f1f1;color:#0f0f0f;font-size:9.4px;line-height:22px;text-align:center">All</div>
<div class="ab" style="left:2940px;top:130px;width:33.6px;height:22px;border-radius:6px;background:#272727;color:#f1f1f1;font-size:9.4px;line-height:22px;text-align:center">Live</div>
<div class="ab" style="left:2982px;top:130px;width:41.0px;height:22px;border-radius:6px;background:#272727;color:#f1f1f1;font-size:9.4px;line-height:22px;text-align:center">Music</div>
<div class="ab" style="left:3031px;top:130px;width:49.7px;height:22px;border-radius:6px;background:#272727;color:#f1f1f1;font-size:9.4px;line-height:22px;text-align:center">Gaming</div>
<div class="ab" style="left:3089px;top:130px;width:39.7px;height:22px;border-radius:6px;background:#272727;color:#f1f1f1;font-size:9.4px;line-height:22px;text-align:center">News</div>
<div class="ab" style="left:3137px;top:130px;width:43.0px;height:22px;border-radius:6px;background:#272727;color:#f1f1f1;font-size:9.4px;line-height:22px;text-align:center">Sports</div>
<div class="ab" style="left:3189px;top:130px;width:52.5px;height:22px;border-radius:6px;background:#272727;color:#f1f1f1;font-size:9.4px;line-height:22px;text-align:center">Learning</div>
<div class="ab" style="left:3250px;top:130px;width:90.8px;height:22px;border-radius:6px;background:#272727;color:#f1f1f1;font-size:9.4px;line-height:22px;text-align:center">Fashion &amp; Beauty</div>
<div class="ab" style="left:3349px;top:130px;width:56.0px;height:22px;border-radius:6px;background:#272727;color:#f1f1f1;font-size:9.4px;line-height:22px;text-align:center">Podcasts</div>
<div class="ab" style="left:3413px;top:130px;width:52.0px;height:22px;border-radius:6px;background:#272727;color:#f1f1f1;font-size:9.4px;line-height:22px;text-align:center">Gadgets</div>
<div class="ab" style="left:3473.6px;top:130px;width:94.1px;height:22px;border-radius:6px;background:#272727;color:#f1f1f1;font-size:9.4px;line-height:22px;text-align:center">Recently uploaded</div>
<div class="ab" style="left:3576.7px;top:130px;width:52.8px;height:22px;border-radius:6px;background:#272727;color:#f1f1f1;font-size:9.4px;line-height:22px;text-align:center">Watched</div>
<div class="ab" style="left:3638.5px;top:130px;width:63.3px;height:22px;border-radius:6px;background:#272727;color:#f1f1f1;font-size:9.4px;line-height:22px;text-align:center">New to you</div>
<div class="ab" style="left:2905.2px;top:175.8px;width:266px;height:150.5px;border-radius:7px;background:linear-gradient(135deg,#667eea,#764ba2)"></div>
<div class="ab" style="left:3137.2px;top:308.8px;width:29.5px;height:12.8px;border-radius:2.5px;background:rgba(0,0,0,.8);color:#fff;font-size:8.6px;line-height:12.8px;text-align:center">12:05</div>
<div class="ab" style="left:2905.2px;top:334.3px;width:25px;height:25px;border-radius:13px;background:linear-gradient(135deg,#f093fb,#f5576c)"></div>
<div class="ab" style="left:2937.9px;top:334.5px;font-size:9.5px;line-height:13.2px;color:#f1f1f1">Ultimate Guide to Web Development in 2024 | Full<br>Tutorial for Beginners</div>
<div class="ab" style="left:2937.8999999999996px;top:363.58px;font-size:8.8px;line-height:11.44px;color:#aaa;">Tech Mastery</div>
<div class="ab" style="left:2937.8999999999996px;top:377.38px;font-size:8.8px;line-height:11.44px;color:#aaa;">1.2M views • 2 days ago</div>
<div class="ab" style="left:3182px;top:175.8px;width:266px;height:150.5px;border-radius:7px;background:linear-gradient(135deg,#f093fb,#f5576c)"></div>
<div class="ab" style="left:3418.7px;top:308.8px;width:24.8px;height:12.8px;border-radius:2.5px;background:rgba(0,0,0,.8);color:#fff;font-size:8.6px;line-height:12.8px;text-align:center">8:34</div>
<div class="ab" style="left:3182px;top:334.3px;width:25px;height:25px;border-radius:13px;background:linear-gradient(135deg,#4facfe,#00f2fe)"></div>
<div class="ab" style="left:3214.7px;top:334.5px;font-size:9.5px;line-height:13.2px;color:#f1f1f1">Epic Gaming Moments That Made History |<br>Compilation 2024</div>
<div class="ab" style="left:3214.7px;top:363.58px;font-size:8.8px;line-height:11.44px;color:#aaa;">GameHub Pro</div>
<div class="ab" style="left:3214.7px;top:377.38px;font-size:8.8px;line-height:11.44px;color:#aaa;">856K views • 1 day ago</div>
<div class="ab" style="left:3459px;top:175.8px;width:266px;height:150.5px;border-radius:7px;background:linear-gradient(135deg,#4facfe,#00f2fe)"></div>
<div class="ab" style="left:3691.0px;top:308.8px;width:29.5px;height:12.8px;border-radius:2.5px;background:rgba(0,0,0,.8);color:#fff;font-size:8.6px;line-height:12.8px;text-align:center">15:22</div>
<div class="ab" style="left:3459px;top:334.3px;width:25px;height:25px;border-radius:13px;background:linear-gradient(135deg,#43e97b,#38f9d7)"></div>
<div class="ab" style="left:3491.7px;top:334.5px;font-size:9.5px;line-height:13.2px;color:#f1f1f1">Top 10 Productivity Hacks That Actually Work in 2024</div>
<div class="ab" style="left:3491.7px;top:350.58px;font-size:8.8px;line-height:11.44px;color:#aaa;">LifeOptimizer</div>
<div class="ab" style="left:3491.7px;top:364.38px;font-size:8.8px;line-height:11.44px;color:#aaa;">2.3M views • 5 days ago</div>
<div class="ab" style="left:3736px;top:175.8px;width:266px;height:150.5px;border-radius:7px;background:linear-gradient(135deg,#fa709a,#fee140)"></div>
<div class="ab" style="left:3968.0px;top:308.8px;width:29.5px;height:12.8px;border-radius:2.5px;background:rgba(0,0,0,.8);color:#fff;font-size:8.6px;line-height:12.8px;text-align:center">20:18</div>
<div class="ab" style="left:3736px;top:334.3px;width:25px;height:25px;border-radius:13px;background:linear-gradient(135deg,#30cfd0,#330867)"></div>
<div class="ab" style="left:3768.7px;top:334.5px;font-size:9.5px;line-height:13.2px;color:#f1f1f1">I Built an AI That Plays Games Better Than Humans</div>
<div class="ab" style="left:3768.7px;top:350.58px;font-size:8.8px;line-height:11.44px;color:#aaa;">AI Experiments</div>
<div class="ab" style="left:3768.7px;top:364.38px;font-size:8.8px;line-height:11.44px;color:#aaa;">3.7M views • 1 week ago</div>
<div class="ab" style="left:2905.2px;top:400.8px;width:266px;height:150.5px;border-radius:7px;background:linear-gradient(135deg,#a8edea,#fed6e3)"></div>
<div class="ab" style="left:3137.2px;top:533.8px;width:29.5px;height:12.8px;border-radius:2.5px;background:rgba(0,0,0,.8);color:#fff;font-size:8.6px;line-height:12.8px;text-align:center">10:45</div>
<div class="ab" style="left:2905.2px;top:559.3px;width:25px;height:25px;border-radius:13px;background:linear-gradient(135deg,#ff9a9e,#fecfef)"></div>
<div class="ab" style="left:2937.9px;top:559.5px;font-size:9.5px;line-height:13.2px;color:#f1f1f1">Cooking the Perfect Steak - Michelin Star Chef<br>Technique</div>
<div class="ab" style="left:2937.8999999999996px;top:588.58px;font-size:8.8px;line-height:11.44px;color:#aaa;">Culinary Masters</div>
<div class="ab" style="left:2937.8999999999996px;top:602.38px;font-size:8.8px;line-height:11.44px;color:#aaa;">945K views • 3 days ago</div>
<div class="ab" style="left:3182px;top:400.8px;width:266px;height:150.5px;border-radius:7px;background:linear-gradient(135deg,#ffecd2,#fcb69f)"></div>
<div class="ab" style="left:3414.0px;top:533.8px;width:29.5px;height:12.8px;border-radius:2.5px;background:rgba(0,0,0,.8);color:#fff;font-size:8.6px;line-height:12.8px;text-align:center">25:12</div>
<div class="ab" style="left:3182px;top:559.3px;width:25px;height:25px;border-radius:13px;background:linear-gradient(135deg,#ff9a9e,#c2d3f5)"></div>
<div class="ab" style="left:3214.7px;top:559.5px;font-size:9.5px;line-height:13.2px;color:#f1f1f1">The Science Behind Why We Dream | Neuroscience<br>Explained</div>
<div class="ab" style="left:3214.7px;top:588.58px;font-size:8.8px;line-height:11.44px;color:#aaa;">Brain Science</div>
<div class="ab" style="left:3214.7px;top:602.38px;font-size:8.8px;line-height:11.44px;color:#aaa;">1.8M views • 4 days ago</div>
<div class="ab" style="left:3459px;top:400.8px;width:266px;height:150.5px;border-radius:7px;background:linear-gradient(135deg,#e0c3fc,#8ec5fc)"></div>
<div class="ab" style="left:3691.0px;top:533.8px;width:29.5px;height:12.8px;border-radius:2.5px;background:rgba(0,0,0,.8);color:#fff;font-size:8.6px;line-height:12.8px;text-align:center">18:33</div>
<div class="ab" style="left:3459px;top:559.3px;width:25px;height:25px;border-radius:13px;background:linear-gradient(135deg,#ff6e7f,#f5576c)"></div>
<div class="ab" style="left:3491.7px;top:559.5px;font-size:9.5px;line-height:13.2px;color:#f1f1f1">My Journey from Beginner to Professional<br>Photographer in 1 Year</div>
<div class="ab" style="left:3491.7px;top:588.58px;font-size:8.8px;line-height:11.44px;color:#aaa;">Photo Journey</div>
<div class="ab" style="left:3491.7px;top:602.38px;font-size:8.8px;line-height:11.44px;color:#aaa;">524K views • 6 days ago</div>
<div class="ab" style="left:3736px;top:400.8px;width:266px;height:150.5px;border-radius:7px;background:linear-gradient(135deg,#fccb90,#d57eeb)"></div>
<div class="ab" style="left:3968.0px;top:533.8px;width:29.5px;height:12.8px;border-radius:2.5px;background:rgba(0,0,0,.8);color:#fff;font-size:8.6px;line-height:12.8px;text-align:center">14:28</div>
<div class="ab" style="left:3736px;top:559.3px;width:25px;height:25px;border-radius:13px;background:linear-gradient(135deg,#e0c3fc,#8ec5fc)"></div>
<div class="ab" style="left:3768.7px;top:559.5px;font-size:9.5px;line-height:13.2px;color:#f1f1f1">Best Budget Smartphones 2024 - Full Review and<br>Comparison</div>
<div class="ab" style="left:3768.7px;top:588.58px;font-size:8.8px;line-height:11.44px;color:#aaa;">Tech Reviews Daily</div>
<div class="ab" style="left:3768.7px;top:602.38px;font-size:8.8px;line-height:11.44px;color:#aaa;">2.1M views • 2 weeks ago</div>
<div class="ab" style="left:2905.2px;top:624.2px;width:266px;height:150.5px;border-radius:7px;background:linear-gradient(135deg,#a1c4fd,#c2e9fb)"></div>
<div class="ab" style="left:3137.2px;top:757.2px;width:29.5px;height:12.8px;border-radius:2.5px;background:rgba(0,0,0,.8);color:#fff;font-size:8.6px;line-height:12.8px;text-align:center">22:07</div>
<div class="ab" style="left:2905.2px;top:782.7px;width:25px;height:25px;border-radius:13px;background:linear-gradient(135deg,#667eea,#764ba2)"></div>
<div class="ab" style="left:2937.9px;top:782.9px;font-size:9.5px;line-height:13.2px;color:#f1f1f1">Learning Python in 2024 - Complete Roadmap for<br>Beginners</div>
<div class="ab" style="left:2937.8999999999996px;top:811.98px;font-size:8.8px;line-height:11.44px;color:#aaa;">Code Academy</div>
<div class="ab" style="left:2937.8999999999996px;top:825.78px;font-size:8.8px;line-height:11.44px;color:#aaa;">1.1M views • 1 week ago</div>
<div class="ab" style="left:3182px;top:624.2px;width:266px;height:150.5px;border-radius:7px;background:linear-gradient(135deg,#fad0c4,#ffd1ff)"></div>
<div class="ab" style="left:3418.7px;top:757.2px;width:24.8px;height:12.8px;border-radius:2.5px;background:rgba(0,0,0,.8);color:#fff;font-size:8.6px;line-height:12.8px;text-align:center">9:51</div>
<div class="ab" style="left:3182px;top:782.7px;width:25px;height:25px;border-radius:13px;background:linear-gradient(135deg,#a8edea,#fed6e3)"></div>
<div class="ab" style="left:3214.7px;top:782.9px;font-size:9.5px;line-height:13.2px;color:#f1f1f1">10 Minute Morning Workout - No Equipment Needed</div>
<div class="ab" style="left:3214.7px;top:798.98px;font-size:8.8px;line-height:11.44px;color:#aaa;">Fitness Daily</div>
<div class="ab" style="left:3214.7px;top:812.78px;font-size:8.8px;line-height:11.44px;color:#aaa;">3.2M views • 5 days ago</div>
<div class="ab" style="left:3459px;top:624.2px;width:266px;height:150.5px;border-radius:7px;background:linear-gradient(135deg,#ff9a9e,#fad0c4)"></div>
<div class="ab" style="left:3691.0px;top:757.2px;width:29.5px;height:12.8px;border-radius:2.5px;background:rgba(0,0,0,.8);color:#fff;font-size:8.6px;line-height:12.8px;text-align:center">16:44</div>
<div class="ab" style="left:3459px;top:782.7px;width:25px;height:25px;border-radius:13px;background:linear-gradient(135deg,#ffecd2,#fcb69f)"></div>
<div class="ab" style="left:3491.7px;top:782.9px;font-size:9.5px;line-height:13.2px;color:#f1f1f1">The Future of Electric Cars - What to Expect in 2025</div>
<div class="ab" style="left:3491.7px;top:798.98px;font-size:8.8px;line-height:11.44px;color:#aaa;">Auto Future</div>
<div class="ab" style="left:3491.7px;top:812.78px;font-size:8.8px;line-height:11.44px;color:#aaa;">867K views • 1 week ago</div>
<div class="ab" style="left:3736px;top:624.2px;width:266px;height:150.5px;border-radius:7px;background:linear-gradient(135deg,#fbc2eb,#e6dee9)"></div>
<div class="ab" style="left:3968.0px;top:757.2px;width:29.5px;height:12.8px;border-radius:2.5px;background:rgba(0,0,0,.8);color:#fff;font-size:8.6px;line-height:12.8px;text-align:center">11:19</div>
<div class="ab" style="left:3736px;top:782.7px;width:25px;height:25px;border-radius:13px;background:linear-gradient(135deg,#fa709a,#fee140)"></div>
<div class="ab" style="left:3768.7px;top:782.9px;font-size:9.5px;line-height:13.2px;color:#f1f1f1">Amazing Wildlife Documentary - Lions of the Serengeti</div>
<div class="ab" style="left:3768.7px;top:798.98px;font-size:8.8px;line-height:11.44px;color:#aaa;">Nature World</div>
<div class="ab" style="left:3768.7px;top:812.78px;font-size:8.8px;line-height:11.44px;color:#aaa;">4.5M views • 2 weeks ago</div>
</div></div>
</body></html>
